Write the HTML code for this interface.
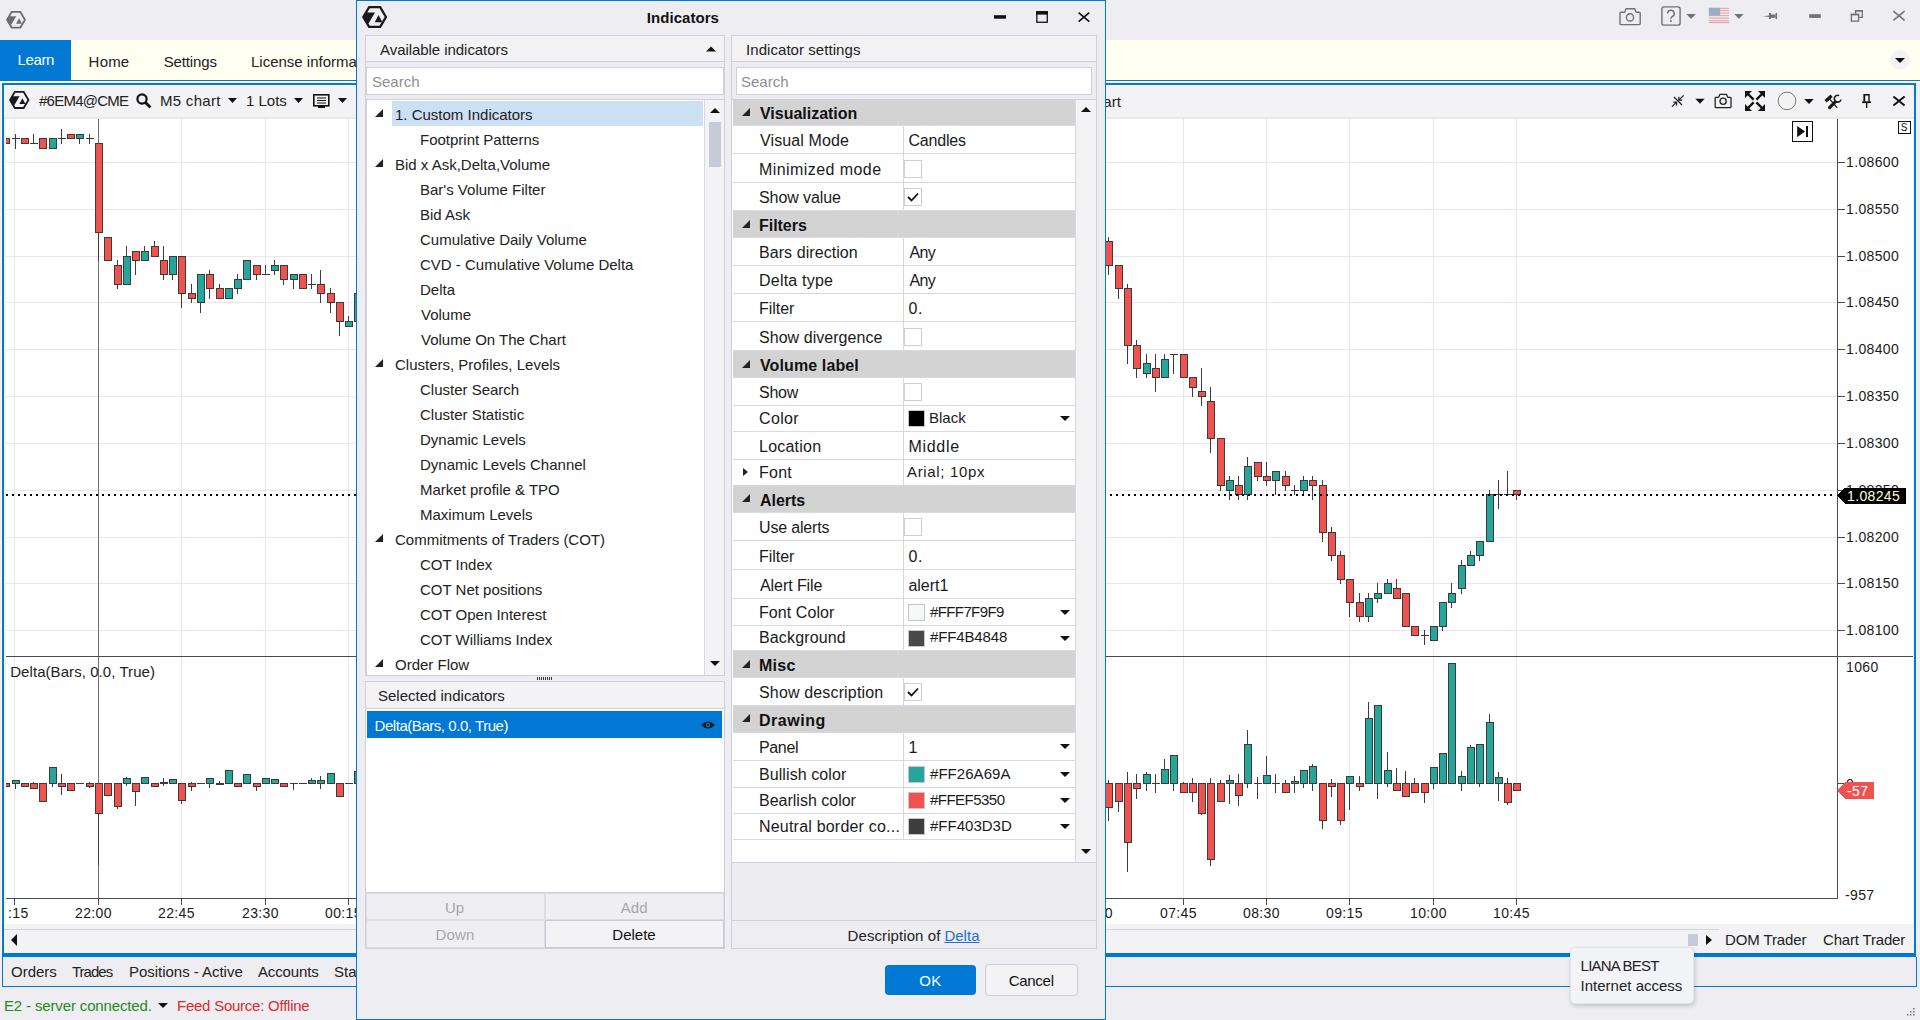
<!DOCTYPE html>
<html><head><meta charset="utf-8"><style>
*{box-sizing:border-box;}
body{margin:0;width:1920px;height:1020px;overflow:hidden;background:#EEEEF2;font-family:"Liberation Sans", sans-serif;color:#1E1E1E;position:relative;}
.a{position:absolute;}
.t{position:absolute;white-space:pre;}
svg text{font-family:"Liberation Sans", sans-serif;}
.ax{font-size:14px;fill:#1a1a1a;letter-spacing:0.35px;}
</style></head><body>

<div class="a" style="left:0;top:0;width:1920px;height:40px;background:#EEEEF2"></div>
<svg style="position:absolute;left:6px;top:11px" width="20.0" height="17.5" viewBox="0 0 100 87.3">
<path fill-rule="evenodd" d="M25.7 0 L74.3 0 L100 43.65 L74.3 87.3 L25.7 87.3 L0 43.65 Z M30.9 9 L69.1 9 L89.6 43.65 L69.1 78.3 L30.9 78.3 L10.4 43.65 Z" fill="#6C6C6F"/>
<path d="M17 25.7 L51.4 25.7 L26.5 68 L20 70 L5 43.65 Z" fill="#6C6C6F"/>
<path d="M65.6 35.9 L80 64 L50.2 64 Z" fill="#6C6C6F"/>
</svg>
<svg class="a" style="left:1600px;top:0" width="320" height="40">
<g fill="none" stroke="#707075" stroke-width="1.4" stroke-linejoin="round">
<path d="M21 12.2 h3.6 l1.4 -3.4 h8.8 l1.4 3.4 h3 a1 1 0 0 1 1 1 v10.4 a1 1 0 0 1 -1 1 h-18.2 a1 1 0 0 1 -1 -1 v-10.4 a1 1 0 0 1 1 -1z"/>
<circle cx="30" cy="17.4" r="3.6"/>
<rect x="61.9" y="6.9" width="18.2" height="18.2" rx="2.2"/>
<path d="M67.6 13.6 a3.3 3.3 0 1 1 4.6 3 c-1 0.5 -1.3 1 -1.3 2.2" stroke-width="1.5"/>
</g>
<circle cx="70.9" cy="21" r="1" fill="#707075"/>
<path d="M86.2 14 h9.7 l-4.85 4.75z" fill="#707075"/>
<rect x="108.8" y="7.8" width="20.3" height="15.2" fill="#F4EEF0"/>
<g fill="#E3A3AB"><rect x="108.8" y="7.8" width="20.3" height="1.1"/><rect x="120.2" y="10.1" width="8.9" height="1.1"/><rect x="120.2" y="12.6" width="8.9" height="1.1"/><rect x="108.8" y="15.1" width="20.3" height="1.1"/><rect x="108.8" y="17.6" width="20.3" height="1.1"/><rect x="108.8" y="20.2" width="20.3" height="1.1"/><rect x="108.8" y="22" width="20.3" height="1.1"/></g>
<rect x="108.8" y="7.8" width="11.4" height="7.8" fill="#A0AACB"/>
<path d="M134.2 14 h9.4 l-4.7 4.75z" fill="#707075"/>
<path d="M162.5 16.25 L169.5 15.6 L169.5 16.9 Z" fill="#707075"/>
<g fill="#707075"><rect x="169" y="13" width="2" height="6"/><rect x="171" y="14.5" width="4.5" height="3.3"/><rect x="175.5" y="13" width="1.6" height="6"/></g>
<rect x="209.2" y="14.2" width="11.6" height="3.7" fill="#707075"/>
<g fill="none" stroke="#707075" stroke-width="1.3"><path d="M255.6 13.7 v-3.1 h6.7 v6.7 h-3.1"/><rect x="251.4" y="14.4" width="7.2" height="6.7"/></g>
<rect x="255" y="10" width="7.9" height="1.6" fill="#707075"/><rect x="250.8" y="13.75" width="8.4" height="1.6" fill="#707075"/>
<path d="M293.3 11.2 l11.3 9.2 M304.6 11.2 l-11.3 9.2" stroke="#707075" stroke-width="1.5"/>
</svg>
<div class="a" style="left:0;top:40px;width:1920px;height:40px;background:#FFFFF2"></div>
<div class="a" style="left:0;top:80px;width:1920px;height:1px;background:#0078D4"></div>
<div class="a" style="left:0;top:81px;width:1920px;height:2px;background:#FFF9F6"></div>
<div class="a" style="left:0;top:40px;width:71px;height:41px;background:#0078D4"></div>
<div class="t" style="left:17.60px;top:52.00px;font-size:15px;line-height:15px;color:#fff;letter-spacing:-0.375px;">Learn</div>
<div class="t" style="left:88.60px;top:53.80px;font-size:15px;line-height:15px;color:#222;letter-spacing:0.200px;">Home</div>
<div class="t" style="left:163.70px;top:53.80px;font-size:15px;line-height:15px;color:#222;letter-spacing:-0.143px;">Settings</div>
<div class="t" style="left:251.00px;top:53.80px;font-size:15px;line-height:15px;color:#222;">License information</div>
<div class="a" style="left:1890px;top:50px;width:20px;height:20px;border-radius:10px;background:#F3F3F4"></div>
<svg class="a" style="left:1890px;top:50px" width="20" height="20"><path d="M5 8 h10 l-5 5z" fill="#111"/></svg>
<div class="a" style="left:1px;top:83px;width:1px;height:875px;background:#FFF9F6"></div>
<div class="a" style="left:2px;top:83px;width:1914px;height:874px;border:2px solid #0078D4;border-bottom:4px solid #0078D4;background:#F3F3F6"></div>
<div class="a" style="left:4px;top:85px;width:1910px;height:1px;background:#fff"></div>
<svg style="position:absolute;left:9px;top:91.4px" width="20.5" height="17.9" viewBox="0 0 100 87.3">
<path fill-rule="evenodd" d="M25.7 0 L74.3 0 L100 43.65 L74.3 87.3 L25.7 87.3 L0 43.65 Z M30.9 9 L69.1 9 L89.6 43.65 L69.1 78.3 L30.9 78.3 L10.4 43.65 Z" fill="#1A1A1A"/>
<path d="M17 25.7 L51.4 25.7 L26.5 68 L20 70 L5 43.65 Z" fill="#1A1A1A"/>
<path d="M65.6 35.9 L80 64 L50.2 64 Z" fill="#1A1A1A"/>
</svg>
<div class="t" style="left:39.00px;top:93.00px;font-size:15px;line-height:15px;color:#222;letter-spacing:-0.750px;">#6EM4@CME</div>
<svg class="a" style="left:130px;top:88px" width="230" height="26">
<circle cx="12" cy="11" r="4.6" fill="none" stroke="#111" stroke-width="2.2"/><path d="M15.5 14.5 l5 5" stroke="#111" stroke-width="2.8"/>
<path d="M98 10 h9 l-4.5 5z" fill="#111"/>
<path d="M164 10 h9 l-4.5 5z" fill="#111"/>
<rect x="183.8" y="6.8" width="15" height="11" fill="none" stroke="#111" stroke-width="1.6"/><path d="M187 10 h9 M187 12.5 h9 M187 15 h9" stroke="#111" stroke-width="1"/><rect x="188" y="18" width="7" height="2" fill="#111"/>
<path d="M208 10 h9 l-4.5 5z" fill="#111"/>
</svg>
<div class="t" style="left:160.00px;top:93.00px;font-size:15px;line-height:15px;color:#222;letter-spacing:0.286px;">M5 chart</div>
<div class="t" style="left:246.00px;top:93.00px;font-size:15px;line-height:15px;color:#222;">1 Lots</div>
<div class="t" style="left:1087.50px;top:94.00px;font-size:15px;line-height:15px;color:#222;">chart</div>
<svg class="a" style="left:1660px;top:86px" width="256" height="32">
<g stroke="#222" stroke-width="1.2" fill="none">
<path d="M14 11 L22 19"/><path d="M23.6 9.3 L18.8 14.1 M18.8 10.8 v3.3 h3.3"/><path d="M12 20.7 L16.6 16.1 M13.3 16.1 h3.3 v3.3"/>
</g>
<path d="M35.3 12.8 h9.4 l-4.7 5z" fill="#111"/>
<g fill="none" stroke="#222" stroke-width="1.3" stroke-linejoin="round"><path d="M56 11.3 h2.6 l1.4 -3 h6.4 l1.4 3 h2.4 a0.8 0.8 0 0 1 0.8 0.8 v8.8 a0.8 0.8 0 0 1 -0.8 0.8 h-14.2 a0.8 0.8 0 0 1 -0.8 -0.8 v-8.8 a0.8 0.8 0 0 1 0.8 -0.8z"/><circle cx="63.1" cy="15.3" r="3.1"/></g>
<g stroke="#111" stroke-width="2.4" fill="none"><path d="M87.5 7.5 L93.6 13.6 M102.5 7.5 L96.4 13.6 M87.5 22.5 L93.6 16.4 M102.5 22.5 L96.4 16.4"/></g>
<g fill="#111"><path d="M85 5 h7 l-7 7z"/><path d="M105 5 h-7 l7 7z"/><path d="M85 25 h7 l-7 -7z"/><path d="M105 25 h-7 l7 -7z"/></g>
<circle cx="127" cy="14.9" r="8.8" fill="none" stroke="#7A7A7A" stroke-width="1"/>
<path d="M144.2 13 h9.6 l-4.8 4.9z" fill="#111"/>
<g stroke="#1a1a1a" fill="none"><path d="M165.6 15.2 L171.6 9.8" stroke-width="3.2"/><path d="M169.3 12.6 L177.2 21.8" stroke-width="1.3"/><path d="M169.6 21.6 L175 16.2" stroke-width="3.2" stroke-linecap="round"/><path d="M179.2 9.6 A3.4 3.4 0 1 0 181 13.6" stroke-width="1.6"/></g>
<g fill="#111"><path d="M203.4 8 h6.3 v7.6 h-6.3z M205.2 9.4 v6.2 h3.1 v-6.2z" fill-rule="evenodd"/><rect x="202.2" y="15.3" width="8.7" height="1.8"/><rect x="206" y="17" width="1.3" height="5"/></g>
<path d="M233.4 10.4 L244.6 19.6 M244.6 10.4 L233.4 19.6" stroke="#111" stroke-width="1.9"/>
</svg>
<div class="a" style="left:4px;top:117px;width:1910px;height:2px;background:#E9E9EE"></div>
<div class="a" style="left:6px;top:119px;width:1907px;height:805px;background:#fff"></div>
<div class="a" style="left:4px;top:929px;width:1715px;height:1px;background:#D5D5DF"></div>
<svg class="a" style="left:8px;top:932px" width="12" height="16"><path d="M9 2 v12 l-6 -6z" fill="#111"/></svg>
<svg class="a" style="left:0;top:0" width="1920" height="1020" shape-rendering="crispEdges">
<defs><clipPath id="cc"><rect x="6" y="119" width="1831" height="779"/></clipPath><clipPath id="tc"><rect x="6" y="900" width="400" height="30"/></clipPath></defs>
<g clip-path="url(#cc)"><rect x="14" y="119" width="1" height="779" fill="#F1E4E9"/>
<rect x="181" y="119" width="1" height="779" fill="#F1E4E9"/>
<rect x="265" y="119" width="1" height="779" fill="#F1E4E9"/>
<rect x="348" y="119" width="1" height="779" fill="#F1E4E9"/>
<rect x="432" y="119" width="1" height="779" fill="#F1E4E9"/>
<rect x="515" y="119" width="1" height="779" fill="#F1E4E9"/>
<rect x="599" y="119" width="1" height="779" fill="#F1E4E9"/>
<rect x="682" y="119" width="1" height="779" fill="#F1E4E9"/>
<rect x="765" y="119" width="1" height="779" fill="#F1E4E9"/>
<rect x="849" y="119" width="1" height="779" fill="#F1E4E9"/>
<rect x="932" y="119" width="1" height="779" fill="#F1E4E9"/>
<rect x="1016" y="119" width="1" height="779" fill="#F1E4E9"/>
<rect x="1099" y="119" width="1" height="779" fill="#F1E4E9"/>
<rect x="1183" y="119" width="1" height="779" fill="#F1E4E9"/>
<rect x="1266" y="119" width="1" height="779" fill="#F1E4E9"/>
<rect x="1349" y="119" width="1" height="779" fill="#F1E4E9"/>
<rect x="1433" y="119" width="1" height="779" fill="#F1E4E9"/>
<rect x="1516" y="119" width="1" height="779" fill="#F1E4E9"/>
<rect x="6" y="162" width="1831" height="1" fill="#F1E4E9"/>
<rect x="6" y="209" width="1831" height="1" fill="#F1E4E9"/>
<rect x="6" y="256" width="1831" height="1" fill="#F1E4E9"/>
<rect x="6" y="302" width="1831" height="1" fill="#F1E4E9"/>
<rect x="6" y="349" width="1831" height="1" fill="#F1E4E9"/>
<rect x="6" y="396" width="1831" height="1" fill="#F1E4E9"/>
<rect x="6" y="443" width="1831" height="1" fill="#F1E4E9"/>
<rect x="6" y="490" width="1831" height="1" fill="#F1E4E9"/>
<rect x="6" y="537" width="1831" height="1" fill="#F1E4E9"/>
<rect x="6" y="583" width="1831" height="1" fill="#F1E4E9"/>
<rect x="6" y="630" width="1831" height="1" fill="#F1E4E9"/></g>
<rect x="98" y="119" width="1" height="779" fill="#707070"/>
<rect x="1837" y="119" width="1" height="780" fill="#4B4B55"/>
<rect x="6" y="656" width="1907" height="1" fill="#4B4B55"/>
<rect x="6" y="898" width="1832" height="1" fill="#4B4B55"/>
<rect x="14" y="899" width="1" height="6" fill="#4B4B55"/>
<text x="8" y="918" class="ax">:15</text>
<rect x="98" y="899" width="1" height="6" fill="#4B4B55"/>
<text x="75" y="918" class="ax">22:00</text>
<rect x="181" y="899" width="1" height="6" fill="#4B4B55"/>
<text x="158" y="918" class="ax">22:45</text>
<rect x="265" y="899" width="1" height="6" fill="#4B4B55"/>
<text x="242" y="918" class="ax">23:30</text>
<rect x="348" y="899" width="1" height="6" fill="#4B4B55"/>
<text x="325" y="918" class="ax">00:15</text>
<rect x="1099" y="899" width="1" height="6" fill="#4B4B55"/>
<text x="1076" y="918" class="ax">07:00</text>
<rect x="1183" y="899" width="1" height="6" fill="#4B4B55"/>
<text x="1160" y="918" class="ax">07:45</text>
<rect x="1266" y="899" width="1" height="6" fill="#4B4B55"/>
<text x="1243" y="918" class="ax">08:30</text>
<rect x="1349" y="899" width="1" height="6" fill="#4B4B55"/>
<text x="1326" y="918" class="ax">09:15</text>
<rect x="1433" y="899" width="1" height="6" fill="#4B4B55"/>
<text x="1410" y="918" class="ax">10:00</text>
<rect x="1516" y="899" width="1" height="6" fill="#4B4B55"/>
<text x="1493" y="918" class="ax">10:45</text>
<rect x="1838" y="162" width="7" height="1" fill="#4B4B55"/>
<text x="1846" y="167" class="ax">1.08600</text>
<rect x="1838" y="209" width="7" height="1" fill="#4B4B55"/>
<text x="1846" y="214" class="ax">1.08550</text>
<rect x="1838" y="256" width="7" height="1" fill="#4B4B55"/>
<text x="1846" y="261" class="ax">1.08500</text>
<rect x="1838" y="302" width="7" height="1" fill="#4B4B55"/>
<text x="1846" y="307" class="ax">1.08450</text>
<rect x="1838" y="349" width="7" height="1" fill="#4B4B55"/>
<text x="1846" y="354" class="ax">1.08400</text>
<rect x="1838" y="396" width="7" height="1" fill="#4B4B55"/>
<text x="1846" y="401" class="ax">1.08350</text>
<rect x="1838" y="443" width="7" height="1" fill="#4B4B55"/>
<text x="1846" y="448" class="ax">1.08300</text>
<rect x="1838" y="490" width="7" height="1" fill="#4B4B55"/>
<text x="1846" y="495" class="ax">1.08250</text>
<rect x="1838" y="537" width="7" height="1" fill="#4B4B55"/>
<text x="1846" y="542" class="ax">1.08200</text>
<rect x="1838" y="583" width="7" height="1" fill="#4B4B55"/>
<text x="1846" y="588" class="ax">1.08150</text>
<rect x="1838" y="630" width="7" height="1" fill="#4B4B55"/>
<text x="1846" y="635" class="ax">1.08100</text>
<g clip-path="url(#cc)"><rect x="2.5" y="138.5" width="7" height="5" fill="#EF5350" stroke="#3D3A3A" stroke-width="1"/>
<rect x="15" y="134" width="1" height="4" fill="#3D3A3A"/>
<rect x="15" y="139" width="1" height="10" fill="#3D3A3A"/>
<rect x="12" y="138" width="8" height="1" fill="#3D3A3A"/>
<rect x="21.5" y="138.5" width="7" height="5" fill="#EF5350" stroke="#3D3A3A" stroke-width="1"/>
<rect x="33" y="134" width="1" height="9" fill="#3D3A3A"/>
<rect x="30" y="143" width="8" height="1" fill="#3D3A3A"/>
<rect x="39.5" y="138.5" width="7" height="10" fill="#EF5350" stroke="#3D3A3A" stroke-width="1"/>
<rect x="49.5" y="138.5" width="7" height="10" fill="#26A69A" stroke="#3D3A3A" stroke-width="1"/>
<rect x="61" y="129" width="1" height="9" fill="#3D3A3A"/>
<rect x="61" y="139" width="1" height="5" fill="#3D3A3A"/>
<rect x="58" y="138" width="8" height="1" fill="#3D3A3A"/>
<rect x="67.5" y="134.5" width="7" height="4" fill="#EF5350" stroke="#3D3A3A" stroke-width="1"/>
<rect x="79" y="139" width="1" height="5" fill="#3D3A3A"/>
<rect x="76.5" y="134.5" width="7" height="4" fill="#26A69A" stroke="#3D3A3A" stroke-width="1"/>
<rect x="89" y="134" width="1" height="4" fill="#3D3A3A"/>
<rect x="89" y="139" width="1" height="5" fill="#3D3A3A"/>
<rect x="86" y="138" width="8" height="1" fill="#3D3A3A"/>
<rect x="98" y="233" width="1" height="28" fill="#3D3A3A"/>
<rect x="95.5" y="143.5" width="7" height="89" fill="#EF5350" stroke="#3D3A3A" stroke-width="1"/>
<rect x="104.5" y="237.5" width="7" height="23" fill="#EF5350" stroke="#3D3A3A" stroke-width="1"/>
<rect x="117" y="260" width="1" height="5" fill="#3D3A3A"/>
<rect x="117" y="285" width="1" height="4" fill="#3D3A3A"/>
<rect x="114.5" y="265.5" width="7" height="19" fill="#EF5350" stroke="#3D3A3A" stroke-width="1"/>
<rect x="126" y="246" width="1" height="10" fill="#3D3A3A"/>
<rect x="123.5" y="256.5" width="7" height="28" fill="#26A69A" stroke="#3D3A3A" stroke-width="1"/>
<rect x="135" y="261" width="1" height="14" fill="#3D3A3A"/>
<rect x="132.5" y="251.5" width="7" height="9" fill="#EF5350" stroke="#3D3A3A" stroke-width="1"/>
<rect x="144" y="246" width="1" height="5" fill="#3D3A3A"/>
<rect x="141.5" y="251.5" width="7" height="9" fill="#26A69A" stroke="#3D3A3A" stroke-width="1"/>
<rect x="154" y="241" width="1" height="5" fill="#3D3A3A"/>
<rect x="151.5" y="246.5" width="7" height="10" fill="#EF5350" stroke="#3D3A3A" stroke-width="1"/>
<rect x="163" y="246" width="1" height="14" fill="#3D3A3A"/>
<rect x="163" y="275" width="1" height="5" fill="#3D3A3A"/>
<rect x="160.5" y="260.5" width="7" height="14" fill="#EF5350" stroke="#3D3A3A" stroke-width="1"/>
<rect x="172" y="275" width="1" height="5" fill="#3D3A3A"/>
<rect x="169.5" y="256.5" width="7" height="18" fill="#26A69A" stroke="#3D3A3A" stroke-width="1"/>
<rect x="181" y="294" width="1" height="14" fill="#3D3A3A"/>
<rect x="178.5" y="256.5" width="7" height="37" fill="#EF5350" stroke="#3D3A3A" stroke-width="1"/>
<rect x="191" y="284" width="1" height="9" fill="#3D3A3A"/>
<rect x="191" y="299" width="1" height="4" fill="#3D3A3A"/>
<rect x="188.5" y="293.5" width="7" height="5" fill="#EF5350" stroke="#3D3A3A" stroke-width="1"/>
<rect x="200" y="303" width="1" height="10" fill="#3D3A3A"/>
<rect x="197.5" y="274.5" width="7" height="28" fill="#26A69A" stroke="#3D3A3A" stroke-width="1"/>
<rect x="209" y="270" width="1" height="4" fill="#3D3A3A"/>
<rect x="209" y="289" width="1" height="10" fill="#3D3A3A"/>
<rect x="206.5" y="274.5" width="7" height="14" fill="#EF5350" stroke="#3D3A3A" stroke-width="1"/>
<rect x="219" y="284" width="1" height="4" fill="#3D3A3A"/>
<rect x="216.5" y="288.5" width="7" height="10" fill="#EF5350" stroke="#3D3A3A" stroke-width="1"/>
<rect x="225.5" y="288.5" width="7" height="10" fill="#26A69A" stroke="#3D3A3A" stroke-width="1"/>
<rect x="237" y="274" width="1" height="5" fill="#3D3A3A"/>
<rect x="237" y="289" width="1" height="5" fill="#3D3A3A"/>
<rect x="234.5" y="279.5" width="7" height="9" fill="#26A69A" stroke="#3D3A3A" stroke-width="1"/>
<rect x="243.5" y="260.5" width="7" height="19" fill="#26A69A" stroke="#3D3A3A" stroke-width="1"/>
<rect x="256" y="275" width="1" height="5" fill="#3D3A3A"/>
<rect x="253.5" y="265.5" width="7" height="9" fill="#EF5350" stroke="#3D3A3A" stroke-width="1"/>
<rect x="265" y="265" width="1" height="9" fill="#3D3A3A"/>
<rect x="262" y="274" width="8" height="1" fill="#3D3A3A"/>
<rect x="274" y="260" width="1" height="5" fill="#3D3A3A"/>
<rect x="274" y="271" width="1" height="4" fill="#3D3A3A"/>
<rect x="271.5" y="265.5" width="7" height="5" fill="#26A69A" stroke="#3D3A3A" stroke-width="1"/>
<rect x="283" y="280" width="1" height="5" fill="#3D3A3A"/>
<rect x="280.5" y="265.5" width="7" height="14" fill="#EF5350" stroke="#3D3A3A" stroke-width="1"/>
<rect x="293" y="280" width="1" height="9" fill="#3D3A3A"/>
<rect x="290.5" y="274.5" width="7" height="5" fill="#26A69A" stroke="#3D3A3A" stroke-width="1"/>
<rect x="299.5" y="274.5" width="7" height="14" fill="#EF5350" stroke="#3D3A3A" stroke-width="1"/>
<rect x="311" y="274" width="1" height="10" fill="#3D3A3A"/>
<rect x="311" y="285" width="1" height="4" fill="#3D3A3A"/>
<rect x="308" y="284" width="8" height="1" fill="#3D3A3A"/>
<rect x="320" y="270" width="1" height="14" fill="#3D3A3A"/>
<rect x="320" y="294" width="1" height="9" fill="#3D3A3A"/>
<rect x="317.5" y="284.5" width="7" height="9" fill="#EF5350" stroke="#3D3A3A" stroke-width="1"/>
<rect x="330" y="288" width="1" height="5" fill="#3D3A3A"/>
<rect x="330" y="303" width="1" height="10" fill="#3D3A3A"/>
<rect x="327.5" y="293.5" width="7" height="9" fill="#EF5350" stroke="#3D3A3A" stroke-width="1"/>
<rect x="339" y="322" width="1" height="14" fill="#3D3A3A"/>
<rect x="336.5" y="302.5" width="7" height="19" fill="#EF5350" stroke="#3D3A3A" stroke-width="1"/>
<rect x="348" y="316" width="1" height="5" fill="#3D3A3A"/>
<rect x="345.5" y="321.5" width="7" height="5" fill="#26A69A" stroke="#3D3A3A" stroke-width="1"/>
<rect x="354.5" y="293.5" width="7" height="28" fill="#26A69A" stroke="#3D3A3A" stroke-width="1"/>
<rect x="1108" y="237" width="1" height="4" fill="#3D3A3A"/>
<rect x="1108" y="266" width="1" height="9" fill="#3D3A3A"/>
<rect x="1105.5" y="241.5" width="7" height="24" fill="#EF5350" stroke="#3D3A3A" stroke-width="1"/>
<rect x="1118" y="289" width="1" height="10" fill="#3D3A3A"/>
<rect x="1115.5" y="265.5" width="7" height="23" fill="#EF5350" stroke="#3D3A3A" stroke-width="1"/>
<rect x="1127" y="284" width="1" height="4" fill="#3D3A3A"/>
<rect x="1127" y="346" width="1" height="18" fill="#3D3A3A"/>
<rect x="1124.5" y="288.5" width="7" height="57" fill="#EF5350" stroke="#3D3A3A" stroke-width="1"/>
<rect x="1136" y="340" width="1" height="5" fill="#3D3A3A"/>
<rect x="1136" y="369" width="1" height="9" fill="#3D3A3A"/>
<rect x="1133.5" y="345.5" width="7" height="23" fill="#EF5350" stroke="#3D3A3A" stroke-width="1"/>
<rect x="1146" y="354" width="1" height="9" fill="#3D3A3A"/>
<rect x="1146" y="374" width="1" height="4" fill="#3D3A3A"/>
<rect x="1143.5" y="363.5" width="7" height="10" fill="#26A69A" stroke="#3D3A3A" stroke-width="1"/>
<rect x="1155" y="354" width="1" height="14" fill="#3D3A3A"/>
<rect x="1155" y="378" width="1" height="14" fill="#3D3A3A"/>
<rect x="1152.5" y="368.5" width="7" height="9" fill="#EF5350" stroke="#3D3A3A" stroke-width="1"/>
<rect x="1164" y="354" width="1" height="5" fill="#3D3A3A"/>
<rect x="1161.5" y="359.5" width="7" height="18" fill="#26A69A" stroke="#3D3A3A" stroke-width="1"/>
<rect x="1173" y="355" width="1" height="19" fill="#3D3A3A"/>
<rect x="1170" y="354" width="8" height="1" fill="#3D3A3A"/>
<rect x="1180.5" y="354.5" width="7" height="23" fill="#EF5350" stroke="#3D3A3A" stroke-width="1"/>
<rect x="1192" y="388" width="1" height="9" fill="#3D3A3A"/>
<rect x="1189.5" y="377.5" width="7" height="10" fill="#EF5350" stroke="#3D3A3A" stroke-width="1"/>
<rect x="1201" y="368" width="1" height="23" fill="#3D3A3A"/>
<rect x="1201" y="397" width="1" height="9" fill="#3D3A3A"/>
<rect x="1198.5" y="391.5" width="7" height="5" fill="#EF5350" stroke="#3D3A3A" stroke-width="1"/>
<rect x="1210" y="387" width="1" height="14" fill="#3D3A3A"/>
<rect x="1210" y="439" width="1" height="14" fill="#3D3A3A"/>
<rect x="1207.5" y="401.5" width="7" height="37" fill="#EF5350" stroke="#3D3A3A" stroke-width="1"/>
<rect x="1220" y="486" width="1" height="5" fill="#3D3A3A"/>
<rect x="1217.5" y="438.5" width="7" height="47" fill="#EF5350" stroke="#3D3A3A" stroke-width="1"/>
<rect x="1229" y="476" width="1" height="4" fill="#3D3A3A"/>
<rect x="1229" y="491" width="1" height="9" fill="#3D3A3A"/>
<rect x="1226.5" y="480.5" width="7" height="10" fill="#26A69A" stroke="#3D3A3A" stroke-width="1"/>
<rect x="1238" y="476" width="1" height="9" fill="#3D3A3A"/>
<rect x="1238" y="495" width="1" height="5" fill="#3D3A3A"/>
<rect x="1235.5" y="485.5" width="7" height="9" fill="#EF5350" stroke="#3D3A3A" stroke-width="1"/>
<rect x="1247" y="457" width="1" height="9" fill="#3D3A3A"/>
<rect x="1247" y="495" width="1" height="5" fill="#3D3A3A"/>
<rect x="1244.5" y="466.5" width="7" height="28" fill="#26A69A" stroke="#3D3A3A" stroke-width="1"/>
<rect x="1257" y="477" width="1" height="4" fill="#3D3A3A"/>
<rect x="1254.5" y="462.5" width="7" height="14" fill="#EF5350" stroke="#3D3A3A" stroke-width="1"/>
<rect x="1266" y="462" width="1" height="14" fill="#3D3A3A"/>
<rect x="1266" y="481" width="1" height="5" fill="#3D3A3A"/>
<rect x="1263.5" y="476.5" width="7" height="4" fill="#EF5350" stroke="#3D3A3A" stroke-width="1"/>
<rect x="1275" y="481" width="1" height="14" fill="#3D3A3A"/>
<rect x="1272.5" y="471.5" width="7" height="9" fill="#26A69A" stroke="#3D3A3A" stroke-width="1"/>
<rect x="1285" y="471" width="1" height="5" fill="#3D3A3A"/>
<rect x="1285" y="486" width="1" height="5" fill="#3D3A3A"/>
<rect x="1282.5" y="476.5" width="7" height="9" fill="#EF5350" stroke="#3D3A3A" stroke-width="1"/>
<rect x="1294" y="485" width="1" height="5" fill="#3D3A3A"/>
<rect x="1294" y="491" width="1" height="4" fill="#3D3A3A"/>
<rect x="1291" y="490" width="8" height="1" fill="#3D3A3A"/>
<rect x="1303" y="476" width="1" height="4" fill="#3D3A3A"/>
<rect x="1303" y="491" width="1" height="4" fill="#3D3A3A"/>
<rect x="1300.5" y="480.5" width="7" height="10" fill="#26A69A" stroke="#3D3A3A" stroke-width="1"/>
<rect x="1312" y="476" width="1" height="4" fill="#3D3A3A"/>
<rect x="1312" y="486" width="1" height="14" fill="#3D3A3A"/>
<rect x="1309.5" y="480.5" width="7" height="5" fill="#EF5350" stroke="#3D3A3A" stroke-width="1"/>
<rect x="1322" y="480" width="1" height="5" fill="#3D3A3A"/>
<rect x="1322" y="533" width="1" height="9" fill="#3D3A3A"/>
<rect x="1319.5" y="485.5" width="7" height="47" fill="#EF5350" stroke="#3D3A3A" stroke-width="1"/>
<rect x="1331" y="527" width="1" height="5" fill="#3D3A3A"/>
<rect x="1331" y="556" width="1" height="5" fill="#3D3A3A"/>
<rect x="1328.5" y="532.5" width="7" height="23" fill="#EF5350" stroke="#3D3A3A" stroke-width="1"/>
<rect x="1340" y="551" width="1" height="4" fill="#3D3A3A"/>
<rect x="1340" y="580" width="1" height="4" fill="#3D3A3A"/>
<rect x="1337.5" y="555.5" width="7" height="24" fill="#EF5350" stroke="#3D3A3A" stroke-width="1"/>
<rect x="1349" y="603" width="1" height="14" fill="#3D3A3A"/>
<rect x="1346.5" y="579.5" width="7" height="23" fill="#EF5350" stroke="#3D3A3A" stroke-width="1"/>
<rect x="1359" y="593" width="1" height="9" fill="#3D3A3A"/>
<rect x="1359" y="617" width="1" height="5" fill="#3D3A3A"/>
<rect x="1356.5" y="602.5" width="7" height="14" fill="#EF5350" stroke="#3D3A3A" stroke-width="1"/>
<rect x="1368" y="593" width="1" height="5" fill="#3D3A3A"/>
<rect x="1368" y="617" width="1" height="5" fill="#3D3A3A"/>
<rect x="1365.5" y="598.5" width="7" height="18" fill="#26A69A" stroke="#3D3A3A" stroke-width="1"/>
<rect x="1377" y="583" width="1" height="10" fill="#3D3A3A"/>
<rect x="1377" y="599" width="1" height="4" fill="#3D3A3A"/>
<rect x="1374.5" y="593.5" width="7" height="5" fill="#26A69A" stroke="#3D3A3A" stroke-width="1"/>
<rect x="1387" y="579" width="1" height="4" fill="#3D3A3A"/>
<rect x="1384.5" y="583.5" width="7" height="10" fill="#26A69A" stroke="#3D3A3A" stroke-width="1"/>
<rect x="1396" y="579" width="1" height="9" fill="#3D3A3A"/>
<rect x="1393.5" y="588.5" width="7" height="10" fill="#EF5350" stroke="#3D3A3A" stroke-width="1"/>
<rect x="1402.5" y="593.5" width="7" height="33" fill="#EF5350" stroke="#3D3A3A" stroke-width="1"/>
<rect x="1411.5" y="626.5" width="7" height="9" fill="#EF5350" stroke="#3D3A3A" stroke-width="1"/>
<rect x="1424" y="630" width="1" height="5" fill="#3D3A3A"/>
<rect x="1424" y="636" width="1" height="9" fill="#3D3A3A"/>
<rect x="1421" y="635" width="8" height="1" fill="#3D3A3A"/>
<rect x="1430.5" y="626.5" width="7" height="14" fill="#26A69A" stroke="#3D3A3A" stroke-width="1"/>
<rect x="1442" y="627" width="1" height="4" fill="#3D3A3A"/>
<rect x="1439.5" y="602.5" width="7" height="24" fill="#26A69A" stroke="#3D3A3A" stroke-width="1"/>
<rect x="1451" y="583" width="1" height="10" fill="#3D3A3A"/>
<rect x="1451" y="603" width="1" height="5" fill="#3D3A3A"/>
<rect x="1448.5" y="593.5" width="7" height="9" fill="#26A69A" stroke="#3D3A3A" stroke-width="1"/>
<rect x="1461" y="560" width="1" height="5" fill="#3D3A3A"/>
<rect x="1461" y="589" width="1" height="5" fill="#3D3A3A"/>
<rect x="1458.5" y="565.5" width="7" height="23" fill="#26A69A" stroke="#3D3A3A" stroke-width="1"/>
<rect x="1470" y="551" width="1" height="4" fill="#3D3A3A"/>
<rect x="1467.5" y="555.5" width="7" height="10" fill="#26A69A" stroke="#3D3A3A" stroke-width="1"/>
<rect x="1479" y="556" width="1" height="5" fill="#3D3A3A"/>
<rect x="1476.5" y="541.5" width="7" height="14" fill="#26A69A" stroke="#3D3A3A" stroke-width="1"/>
<rect x="1489" y="490" width="1" height="4" fill="#3D3A3A"/>
<rect x="1486.5" y="494.5" width="7" height="47" fill="#26A69A" stroke="#3D3A3A" stroke-width="1"/>
<rect x="1498" y="480" width="1" height="14" fill="#3D3A3A"/>
<rect x="1498" y="495" width="1" height="14" fill="#3D3A3A"/>
<rect x="1495" y="494" width="8" height="1" fill="#3D3A3A"/>
<rect x="1507" y="471" width="1" height="23" fill="#3D3A3A"/>
<rect x="1504" y="494" width="8" height="1" fill="#3D3A3A"/>
<rect x="1516" y="495" width="1" height="5" fill="#3D3A3A"/>
<rect x="1513.5" y="490.5" width="7" height="4" fill="#EF5350" stroke="#3D3A3A" stroke-width="1"/><rect x="2.5" y="783.5" width="7" height="3" fill="#EF5350" stroke="#3D3A3A" stroke-width="1"/>
<rect x="15" y="784" width="1" height="5" fill="#3D3A3A"/>
<rect x="12.5" y="780.5" width="7" height="3" fill="#26A69A" stroke="#3D3A3A" stroke-width="1"/>
<rect x="21.5" y="783.5" width="7" height="3" fill="#EF5350" stroke="#3D3A3A" stroke-width="1"/>
<rect x="33" y="782" width="1" height="1" fill="#3D3A3A"/>
<rect x="30.5" y="783.5" width="7" height="5" fill="#EF5350" stroke="#3D3A3A" stroke-width="1"/>
<rect x="39.5" y="783.5" width="7" height="18" fill="#EF5350" stroke="#3D3A3A" stroke-width="1"/>
<rect x="52" y="784" width="1" height="3" fill="#3D3A3A"/>
<rect x="49.5" y="767.5" width="7" height="16" fill="#26A69A" stroke="#3D3A3A" stroke-width="1"/>
<rect x="61" y="774" width="1" height="9" fill="#3D3A3A"/>
<rect x="61" y="787" width="1" height="8" fill="#3D3A3A"/>
<rect x="58.5" y="783.5" width="7" height="3" fill="#EF5350" stroke="#3D3A3A" stroke-width="1"/>
<rect x="67.5" y="783.5" width="7" height="7" fill="#EF5350" stroke="#3D3A3A" stroke-width="1"/>
<rect x="76" y="783" width="8" height="1" fill="#3D3A3A"/>
<rect x="89" y="782" width="1" height="1" fill="#3D3A3A"/>
<rect x="89" y="787" width="1" height="1" fill="#3D3A3A"/>
<rect x="86.5" y="783.5" width="7" height="3" fill="#EF5350" stroke="#3D3A3A" stroke-width="1"/>
<rect x="98" y="814" width="1" height="51" fill="#3D3A3A"/>
<rect x="95.5" y="783.5" width="7" height="30" fill="#EF5350" stroke="#3D3A3A" stroke-width="1"/>
<rect x="104.5" y="783.5" width="7" height="12" fill="#EF5350" stroke="#3D3A3A" stroke-width="1"/>
<rect x="117" y="807" width="1" height="2" fill="#3D3A3A"/>
<rect x="114.5" y="783.5" width="7" height="23" fill="#EF5350" stroke="#3D3A3A" stroke-width="1"/>
<rect x="126" y="777" width="1" height="1" fill="#3D3A3A"/>
<rect x="126" y="784" width="1" height="2" fill="#3D3A3A"/>
<rect x="123.5" y="778.5" width="7" height="5" fill="#26A69A" stroke="#3D3A3A" stroke-width="1"/>
<rect x="135" y="792" width="1" height="14" fill="#3D3A3A"/>
<rect x="132.5" y="783.5" width="7" height="8" fill="#EF5350" stroke="#3D3A3A" stroke-width="1"/>
<rect x="141.5" y="777.5" width="7" height="6" fill="#26A69A" stroke="#3D3A3A" stroke-width="1"/>
<rect x="151.5" y="783.5" width="7" height="3" fill="#EF5350" stroke="#3D3A3A" stroke-width="1"/>
<rect x="163" y="778" width="1" height="4" fill="#3D3A3A"/>
<rect x="163" y="784" width="1" height="2" fill="#3D3A3A"/>
<rect x="160.5" y="782.5" width="7" height="1" fill="#26A69A" stroke="#3D3A3A" stroke-width="1"/>
<rect x="169.5" y="779.5" width="7" height="4" fill="#26A69A" stroke="#3D3A3A" stroke-width="1"/>
<rect x="181" y="801" width="1" height="3" fill="#3D3A3A"/>
<rect x="178.5" y="783.5" width="7" height="17" fill="#EF5350" stroke="#3D3A3A" stroke-width="1"/>
<rect x="191" y="782" width="1" height="1" fill="#3D3A3A"/>
<rect x="191" y="787" width="1" height="4" fill="#3D3A3A"/>
<rect x="188.5" y="783.5" width="7" height="3" fill="#EF5350" stroke="#3D3A3A" stroke-width="1"/>
<rect x="197" y="783" width="8" height="1" fill="#3D3A3A"/>
<rect x="209" y="784" width="1" height="4" fill="#3D3A3A"/>
<rect x="206.5" y="778.5" width="7" height="5" fill="#26A69A" stroke="#3D3A3A" stroke-width="1"/>
<rect x="219" y="781" width="1" height="2" fill="#3D3A3A"/>
<rect x="216.5" y="783.5" width="7" height="1" fill="#EF5350" stroke="#3D3A3A" stroke-width="1"/>
<rect x="225.5" y="770.5" width="7" height="13" fill="#26A69A" stroke="#3D3A3A" stroke-width="1"/>
<rect x="234.5" y="783.5" width="7" height="3" fill="#EF5350" stroke="#3D3A3A" stroke-width="1"/>
<rect x="243.5" y="774.5" width="7" height="9" fill="#26A69A" stroke="#3D3A3A" stroke-width="1"/>
<rect x="256" y="787" width="1" height="4" fill="#3D3A3A"/>
<rect x="253.5" y="783.5" width="7" height="3" fill="#EF5350" stroke="#3D3A3A" stroke-width="1"/>
<rect x="262.5" y="778.5" width="7" height="5" fill="#26A69A" stroke="#3D3A3A" stroke-width="1"/>
<rect x="271.5" y="779.5" width="7" height="4" fill="#26A69A" stroke="#3D3A3A" stroke-width="1"/>
<rect x="280.5" y="783.5" width="7" height="3" fill="#EF5350" stroke="#3D3A3A" stroke-width="1"/>
<rect x="293" y="784" width="1" height="6" fill="#3D3A3A"/>
<rect x="290" y="783" width="8" height="1" fill="#3D3A3A"/>
<rect x="299" y="783" width="8" height="1" fill="#3D3A3A"/>
<rect x="311" y="778" width="1" height="2" fill="#3D3A3A"/>
<rect x="308.5" y="780.5" width="7" height="3" fill="#26A69A" stroke="#3D3A3A" stroke-width="1"/>
<rect x="320" y="776" width="1" height="4" fill="#3D3A3A"/>
<rect x="320" y="784" width="1" height="5" fill="#3D3A3A"/>
<rect x="317.5" y="780.5" width="7" height="3" fill="#26A69A" stroke="#3D3A3A" stroke-width="1"/>
<rect x="327.5" y="773.5" width="7" height="10" fill="#26A69A" stroke="#3D3A3A" stroke-width="1"/>
<rect x="336.5" y="783.5" width="7" height="13" fill="#EF5350" stroke="#3D3A3A" stroke-width="1"/>
<rect x="345" y="783" width="8" height="1" fill="#3D3A3A"/>
<rect x="354.5" y="771.5" width="7" height="12" fill="#26A69A" stroke="#3D3A3A" stroke-width="1"/>
<rect x="1108" y="780" width="1" height="3" fill="#3D3A3A"/>
<rect x="1108" y="808" width="1" height="13" fill="#3D3A3A"/>
<rect x="1105.5" y="783.5" width="7" height="24" fill="#EF5350" stroke="#3D3A3A" stroke-width="1"/>
<rect x="1118" y="802" width="1" height="10" fill="#3D3A3A"/>
<rect x="1115.5" y="783.5" width="7" height="18" fill="#EF5350" stroke="#3D3A3A" stroke-width="1"/>
<rect x="1127" y="772" width="1" height="11" fill="#3D3A3A"/>
<rect x="1127" y="843" width="1" height="29" fill="#3D3A3A"/>
<rect x="1124.5" y="783.5" width="7" height="59" fill="#EF5350" stroke="#3D3A3A" stroke-width="1"/>
<rect x="1136" y="774" width="1" height="9" fill="#3D3A3A"/>
<rect x="1136" y="789" width="1" height="10" fill="#3D3A3A"/>
<rect x="1133.5" y="783.5" width="7" height="5" fill="#EF5350" stroke="#3D3A3A" stroke-width="1"/>
<rect x="1146" y="772" width="1" height="2" fill="#3D3A3A"/>
<rect x="1146" y="784" width="1" height="7" fill="#3D3A3A"/>
<rect x="1143.5" y="774.5" width="7" height="9" fill="#26A69A" stroke="#3D3A3A" stroke-width="1"/>
<rect x="1155" y="774" width="1" height="9" fill="#3D3A3A"/>
<rect x="1155" y="784" width="1" height="9" fill="#3D3A3A"/>
<rect x="1152" y="783" width="8" height="1" fill="#3D3A3A"/>
<rect x="1164" y="759" width="1" height="10" fill="#3D3A3A"/>
<rect x="1161.5" y="769.5" width="7" height="14" fill="#26A69A" stroke="#3D3A3A" stroke-width="1"/>
<rect x="1173" y="784" width="1" height="7" fill="#3D3A3A"/>
<rect x="1170.5" y="755.5" width="7" height="28" fill="#26A69A" stroke="#3D3A3A" stroke-width="1"/>
<rect x="1183" y="782" width="1" height="1" fill="#3D3A3A"/>
<rect x="1180.5" y="783.5" width="7" height="9" fill="#EF5350" stroke="#3D3A3A" stroke-width="1"/>
<rect x="1192" y="778" width="1" height="5" fill="#3D3A3A"/>
<rect x="1192" y="793" width="1" height="9" fill="#3D3A3A"/>
<rect x="1189.5" y="783.5" width="7" height="9" fill="#EF5350" stroke="#3D3A3A" stroke-width="1"/>
<rect x="1201" y="814" width="1" height="1" fill="#3D3A3A"/>
<rect x="1198.5" y="783.5" width="7" height="30" fill="#EF5350" stroke="#3D3A3A" stroke-width="1"/>
<rect x="1210" y="778" width="1" height="5" fill="#3D3A3A"/>
<rect x="1210" y="860" width="1" height="6" fill="#3D3A3A"/>
<rect x="1207.5" y="783.5" width="7" height="76" fill="#EF5350" stroke="#3D3A3A" stroke-width="1"/>
<rect x="1220" y="780" width="1" height="3" fill="#3D3A3A"/>
<rect x="1217.5" y="783.5" width="7" height="18" fill="#EF5350" stroke="#3D3A3A" stroke-width="1"/>
<rect x="1229" y="775" width="1" height="5" fill="#3D3A3A"/>
<rect x="1229" y="784" width="1" height="20" fill="#3D3A3A"/>
<rect x="1226.5" y="780.5" width="7" height="3" fill="#26A69A" stroke="#3D3A3A" stroke-width="1"/>
<rect x="1238" y="774" width="1" height="9" fill="#3D3A3A"/>
<rect x="1238" y="796" width="1" height="10" fill="#3D3A3A"/>
<rect x="1235.5" y="783.5" width="7" height="12" fill="#EF5350" stroke="#3D3A3A" stroke-width="1"/>
<rect x="1247" y="730" width="1" height="14" fill="#3D3A3A"/>
<rect x="1247" y="784" width="1" height="4" fill="#3D3A3A"/>
<rect x="1244.5" y="744.5" width="7" height="39" fill="#26A69A" stroke="#3D3A3A" stroke-width="1"/>
<rect x="1257" y="777" width="1" height="6" fill="#3D3A3A"/>
<rect x="1257" y="784" width="1" height="15" fill="#3D3A3A"/>
<rect x="1254" y="783" width="8" height="1" fill="#3D3A3A"/>
<rect x="1266" y="756" width="1" height="19" fill="#3D3A3A"/>
<rect x="1263.5" y="775.5" width="7" height="8" fill="#26A69A" stroke="#3D3A3A" stroke-width="1"/>
<rect x="1275" y="774" width="1" height="9" fill="#3D3A3A"/>
<rect x="1275" y="784" width="1" height="9" fill="#3D3A3A"/>
<rect x="1272" y="783" width="8" height="1" fill="#3D3A3A"/>
<rect x="1285" y="780" width="1" height="3" fill="#3D3A3A"/>
<rect x="1282.5" y="783.5" width="7" height="9" fill="#EF5350" stroke="#3D3A3A" stroke-width="1"/>
<rect x="1294" y="776" width="1" height="5" fill="#3D3A3A"/>
<rect x="1294" y="784" width="1" height="9" fill="#3D3A3A"/>
<rect x="1291.5" y="781.5" width="7" height="2" fill="#26A69A" stroke="#3D3A3A" stroke-width="1"/>
<rect x="1303" y="784" width="1" height="4" fill="#3D3A3A"/>
<rect x="1300.5" y="770.5" width="7" height="13" fill="#26A69A" stroke="#3D3A3A" stroke-width="1"/>
<rect x="1312" y="764" width="1" height="2" fill="#3D3A3A"/>
<rect x="1312" y="784" width="1" height="7" fill="#3D3A3A"/>
<rect x="1309.5" y="766.5" width="7" height="17" fill="#26A69A" stroke="#3D3A3A" stroke-width="1"/>
<rect x="1322" y="821" width="1" height="8" fill="#3D3A3A"/>
<rect x="1319.5" y="783.5" width="7" height="37" fill="#EF5350" stroke="#3D3A3A" stroke-width="1"/>
<rect x="1331" y="779" width="1" height="4" fill="#3D3A3A"/>
<rect x="1331" y="787" width="1" height="10" fill="#3D3A3A"/>
<rect x="1328.5" y="783.5" width="7" height="3" fill="#EF5350" stroke="#3D3A3A" stroke-width="1"/>
<rect x="1340" y="821" width="1" height="4" fill="#3D3A3A"/>
<rect x="1337.5" y="783.5" width="7" height="37" fill="#EF5350" stroke="#3D3A3A" stroke-width="1"/>
<rect x="1349" y="784" width="1" height="26" fill="#3D3A3A"/>
<rect x="1346.5" y="776.5" width="7" height="7" fill="#26A69A" stroke="#3D3A3A" stroke-width="1"/>
<rect x="1359" y="776" width="1" height="7" fill="#3D3A3A"/>
<rect x="1359" y="787" width="1" height="4" fill="#3D3A3A"/>
<rect x="1356.5" y="783.5" width="7" height="3" fill="#EF5350" stroke="#3D3A3A" stroke-width="1"/>
<rect x="1368" y="702" width="1" height="16" fill="#3D3A3A"/>
<rect x="1365.5" y="718.5" width="7" height="65" fill="#26A69A" stroke="#3D3A3A" stroke-width="1"/>
<rect x="1377" y="784" width="1" height="15" fill="#3D3A3A"/>
<rect x="1374.5" y="705.5" width="7" height="78" fill="#26A69A" stroke="#3D3A3A" stroke-width="1"/>
<rect x="1387" y="752" width="1" height="18" fill="#3D3A3A"/>
<rect x="1387" y="784" width="1" height="3" fill="#3D3A3A"/>
<rect x="1384.5" y="770.5" width="7" height="13" fill="#26A69A" stroke="#3D3A3A" stroke-width="1"/>
<rect x="1396" y="768" width="1" height="15" fill="#3D3A3A"/>
<rect x="1393.5" y="783.5" width="7" height="7" fill="#EF5350" stroke="#3D3A3A" stroke-width="1"/>
<rect x="1405" y="771" width="1" height="12" fill="#3D3A3A"/>
<rect x="1402.5" y="783.5" width="7" height="13" fill="#EF5350" stroke="#3D3A3A" stroke-width="1"/>
<rect x="1414" y="778" width="1" height="5" fill="#3D3A3A"/>
<rect x="1411.5" y="783.5" width="7" height="9" fill="#EF5350" stroke="#3D3A3A" stroke-width="1"/>
<rect x="1424" y="793" width="1" height="10" fill="#3D3A3A"/>
<rect x="1421.5" y="783.5" width="7" height="9" fill="#EF5350" stroke="#3D3A3A" stroke-width="1"/>
<rect x="1433" y="784" width="1" height="5" fill="#3D3A3A"/>
<rect x="1430.5" y="767.5" width="7" height="16" fill="#26A69A" stroke="#3D3A3A" stroke-width="1"/>
<rect x="1439.5" y="753.5" width="7" height="30" fill="#26A69A" stroke="#3D3A3A" stroke-width="1"/>
<rect x="1448.5" y="663.5" width="7" height="120" fill="#26A69A" stroke="#3D3A3A" stroke-width="1"/>
<rect x="1461" y="771" width="1" height="5" fill="#3D3A3A"/>
<rect x="1461" y="784" width="1" height="7" fill="#3D3A3A"/>
<rect x="1458.5" y="776.5" width="7" height="7" fill="#26A69A" stroke="#3D3A3A" stroke-width="1"/>
<rect x="1470" y="745" width="1" height="2" fill="#3D3A3A"/>
<rect x="1467.5" y="747.5" width="7" height="36" fill="#26A69A" stroke="#3D3A3A" stroke-width="1"/>
<rect x="1479" y="784" width="1" height="3" fill="#3D3A3A"/>
<rect x="1476.5" y="744.5" width="7" height="39" fill="#26A69A" stroke="#3D3A3A" stroke-width="1"/>
<rect x="1489" y="714" width="1" height="8" fill="#3D3A3A"/>
<rect x="1486.5" y="722.5" width="7" height="61" fill="#26A69A" stroke="#3D3A3A" stroke-width="1"/>
<rect x="1498" y="772" width="1" height="5" fill="#3D3A3A"/>
<rect x="1498" y="784" width="1" height="17" fill="#3D3A3A"/>
<rect x="1495.5" y="777.5" width="7" height="6" fill="#26A69A" stroke="#3D3A3A" stroke-width="1"/>
<rect x="1507" y="778" width="1" height="5" fill="#3D3A3A"/>
<rect x="1507" y="803" width="1" height="2" fill="#3D3A3A"/>
<rect x="1504.5" y="783.5" width="7" height="19" fill="#EF5350" stroke="#3D3A3A" stroke-width="1"/>
<rect x="1513.5" y="783.5" width="7" height="7" fill="#EF5350" stroke="#3D3A3A" stroke-width="1"/>
<rect x="6" y="494" width="2" height="2" fill="#000"/><rect x="12" y="494" width="2" height="2" fill="#000"/><rect x="18" y="494" width="2" height="2" fill="#000"/><rect x="24" y="494" width="2" height="2" fill="#000"/><rect x="30" y="494" width="2" height="2" fill="#000"/><rect x="36" y="494" width="2" height="2" fill="#000"/><rect x="42" y="494" width="2" height="2" fill="#000"/><rect x="48" y="494" width="2" height="2" fill="#000"/><rect x="54" y="494" width="2" height="2" fill="#000"/><rect x="60" y="494" width="2" height="2" fill="#000"/><rect x="66" y="494" width="2" height="2" fill="#000"/><rect x="72" y="494" width="2" height="2" fill="#000"/><rect x="78" y="494" width="2" height="2" fill="#000"/><rect x="84" y="494" width="2" height="2" fill="#000"/><rect x="90" y="494" width="2" height="2" fill="#000"/><rect x="96" y="494" width="2" height="2" fill="#000"/><rect x="102" y="494" width="2" height="2" fill="#000"/><rect x="108" y="494" width="2" height="2" fill="#000"/><rect x="114" y="494" width="2" height="2" fill="#000"/><rect x="120" y="494" width="2" height="2" fill="#000"/><rect x="126" y="494" width="2" height="2" fill="#000"/><rect x="132" y="494" width="2" height="2" fill="#000"/><rect x="138" y="494" width="2" height="2" fill="#000"/><rect x="144" y="494" width="2" height="2" fill="#000"/><rect x="150" y="494" width="2" height="2" fill="#000"/><rect x="156" y="494" width="2" height="2" fill="#000"/><rect x="162" y="494" width="2" height="2" fill="#000"/><rect x="168" y="494" width="2" height="2" fill="#000"/><rect x="174" y="494" width="2" height="2" fill="#000"/><rect x="180" y="494" width="2" height="2" fill="#000"/><rect x="186" y="494" width="2" height="2" fill="#000"/><rect x="192" y="494" width="2" height="2" fill="#000"/><rect x="198" y="494" width="2" height="2" fill="#000"/><rect x="204" y="494" width="2" height="2" fill="#000"/><rect x="210" y="494" width="2" height="2" fill="#000"/><rect x="216" y="494" width="2" height="2" fill="#000"/><rect x="222" y="494" width="2" height="2" fill="#000"/><rect x="228" y="494" width="2" height="2" fill="#000"/><rect x="234" y="494" width="2" height="2" fill="#000"/><rect x="240" y="494" width="2" height="2" fill="#000"/><rect x="246" y="494" width="2" height="2" fill="#000"/><rect x="252" y="494" width="2" height="2" fill="#000"/><rect x="258" y="494" width="2" height="2" fill="#000"/><rect x="264" y="494" width="2" height="2" fill="#000"/><rect x="270" y="494" width="2" height="2" fill="#000"/><rect x="276" y="494" width="2" height="2" fill="#000"/><rect x="282" y="494" width="2" height="2" fill="#000"/><rect x="288" y="494" width="2" height="2" fill="#000"/><rect x="294" y="494" width="2" height="2" fill="#000"/><rect x="300" y="494" width="2" height="2" fill="#000"/><rect x="306" y="494" width="2" height="2" fill="#000"/><rect x="312" y="494" width="2" height="2" fill="#000"/><rect x="318" y="494" width="2" height="2" fill="#000"/><rect x="324" y="494" width="2" height="2" fill="#000"/><rect x="330" y="494" width="2" height="2" fill="#000"/><rect x="336" y="494" width="2" height="2" fill="#000"/><rect x="342" y="494" width="2" height="2" fill="#000"/><rect x="348" y="494" width="2" height="2" fill="#000"/><rect x="354" y="494" width="2" height="2" fill="#000"/><rect x="360" y="494" width="2" height="2" fill="#000"/><rect x="366" y="494" width="2" height="2" fill="#000"/><rect x="372" y="494" width="2" height="2" fill="#000"/><rect x="378" y="494" width="2" height="2" fill="#000"/><rect x="384" y="494" width="2" height="2" fill="#000"/><rect x="390" y="494" width="2" height="2" fill="#000"/><rect x="396" y="494" width="2" height="2" fill="#000"/><rect x="402" y="494" width="2" height="2" fill="#000"/><rect x="408" y="494" width="2" height="2" fill="#000"/><rect x="414" y="494" width="2" height="2" fill="#000"/><rect x="420" y="494" width="2" height="2" fill="#000"/><rect x="426" y="494" width="2" height="2" fill="#000"/><rect x="432" y="494" width="2" height="2" fill="#000"/><rect x="438" y="494" width="2" height="2" fill="#000"/><rect x="444" y="494" width="2" height="2" fill="#000"/><rect x="450" y="494" width="2" height="2" fill="#000"/><rect x="456" y="494" width="2" height="2" fill="#000"/><rect x="462" y="494" width="2" height="2" fill="#000"/><rect x="468" y="494" width="2" height="2" fill="#000"/><rect x="474" y="494" width="2" height="2" fill="#000"/><rect x="480" y="494" width="2" height="2" fill="#000"/><rect x="486" y="494" width="2" height="2" fill="#000"/><rect x="492" y="494" width="2" height="2" fill="#000"/><rect x="498" y="494" width="2" height="2" fill="#000"/><rect x="504" y="494" width="2" height="2" fill="#000"/><rect x="510" y="494" width="2" height="2" fill="#000"/><rect x="516" y="494" width="2" height="2" fill="#000"/><rect x="522" y="494" width="2" height="2" fill="#000"/><rect x="528" y="494" width="2" height="2" fill="#000"/><rect x="534" y="494" width="2" height="2" fill="#000"/><rect x="540" y="494" width="2" height="2" fill="#000"/><rect x="546" y="494" width="2" height="2" fill="#000"/><rect x="552" y="494" width="2" height="2" fill="#000"/><rect x="558" y="494" width="2" height="2" fill="#000"/><rect x="564" y="494" width="2" height="2" fill="#000"/><rect x="570" y="494" width="2" height="2" fill="#000"/><rect x="576" y="494" width="2" height="2" fill="#000"/><rect x="582" y="494" width="2" height="2" fill="#000"/><rect x="588" y="494" width="2" height="2" fill="#000"/><rect x="594" y="494" width="2" height="2" fill="#000"/><rect x="600" y="494" width="2" height="2" fill="#000"/><rect x="606" y="494" width="2" height="2" fill="#000"/><rect x="612" y="494" width="2" height="2" fill="#000"/><rect x="618" y="494" width="2" height="2" fill="#000"/><rect x="624" y="494" width="2" height="2" fill="#000"/><rect x="630" y="494" width="2" height="2" fill="#000"/><rect x="636" y="494" width="2" height="2" fill="#000"/><rect x="642" y="494" width="2" height="2" fill="#000"/><rect x="648" y="494" width="2" height="2" fill="#000"/><rect x="654" y="494" width="2" height="2" fill="#000"/><rect x="660" y="494" width="2" height="2" fill="#000"/><rect x="666" y="494" width="2" height="2" fill="#000"/><rect x="672" y="494" width="2" height="2" fill="#000"/><rect x="678" y="494" width="2" height="2" fill="#000"/><rect x="684" y="494" width="2" height="2" fill="#000"/><rect x="690" y="494" width="2" height="2" fill="#000"/><rect x="696" y="494" width="2" height="2" fill="#000"/><rect x="702" y="494" width="2" height="2" fill="#000"/><rect x="708" y="494" width="2" height="2" fill="#000"/><rect x="714" y="494" width="2" height="2" fill="#000"/><rect x="720" y="494" width="2" height="2" fill="#000"/><rect x="726" y="494" width="2" height="2" fill="#000"/><rect x="732" y="494" width="2" height="2" fill="#000"/><rect x="738" y="494" width="2" height="2" fill="#000"/><rect x="744" y="494" width="2" height="2" fill="#000"/><rect x="750" y="494" width="2" height="2" fill="#000"/><rect x="756" y="494" width="2" height="2" fill="#000"/><rect x="762" y="494" width="2" height="2" fill="#000"/><rect x="768" y="494" width="2" height="2" fill="#000"/><rect x="774" y="494" width="2" height="2" fill="#000"/><rect x="780" y="494" width="2" height="2" fill="#000"/><rect x="786" y="494" width="2" height="2" fill="#000"/><rect x="792" y="494" width="2" height="2" fill="#000"/><rect x="798" y="494" width="2" height="2" fill="#000"/><rect x="804" y="494" width="2" height="2" fill="#000"/><rect x="810" y="494" width="2" height="2" fill="#000"/><rect x="816" y="494" width="2" height="2" fill="#000"/><rect x="822" y="494" width="2" height="2" fill="#000"/><rect x="828" y="494" width="2" height="2" fill="#000"/><rect x="834" y="494" width="2" height="2" fill="#000"/><rect x="840" y="494" width="2" height="2" fill="#000"/><rect x="846" y="494" width="2" height="2" fill="#000"/><rect x="852" y="494" width="2" height="2" fill="#000"/><rect x="858" y="494" width="2" height="2" fill="#000"/><rect x="864" y="494" width="2" height="2" fill="#000"/><rect x="870" y="494" width="2" height="2" fill="#000"/><rect x="876" y="494" width="2" height="2" fill="#000"/><rect x="882" y="494" width="2" height="2" fill="#000"/><rect x="888" y="494" width="2" height="2" fill="#000"/><rect x="894" y="494" width="2" height="2" fill="#000"/><rect x="900" y="494" width="2" height="2" fill="#000"/><rect x="906" y="494" width="2" height="2" fill="#000"/><rect x="912" y="494" width="2" height="2" fill="#000"/><rect x="918" y="494" width="2" height="2" fill="#000"/><rect x="924" y="494" width="2" height="2" fill="#000"/><rect x="930" y="494" width="2" height="2" fill="#000"/><rect x="936" y="494" width="2" height="2" fill="#000"/><rect x="942" y="494" width="2" height="2" fill="#000"/><rect x="948" y="494" width="2" height="2" fill="#000"/><rect x="954" y="494" width="2" height="2" fill="#000"/><rect x="960" y="494" width="2" height="2" fill="#000"/><rect x="966" y="494" width="2" height="2" fill="#000"/><rect x="972" y="494" width="2" height="2" fill="#000"/><rect x="978" y="494" width="2" height="2" fill="#000"/><rect x="984" y="494" width="2" height="2" fill="#000"/><rect x="990" y="494" width="2" height="2" fill="#000"/><rect x="996" y="494" width="2" height="2" fill="#000"/><rect x="1002" y="494" width="2" height="2" fill="#000"/><rect x="1008" y="494" width="2" height="2" fill="#000"/><rect x="1014" y="494" width="2" height="2" fill="#000"/><rect x="1020" y="494" width="2" height="2" fill="#000"/><rect x="1026" y="494" width="2" height="2" fill="#000"/><rect x="1032" y="494" width="2" height="2" fill="#000"/><rect x="1038" y="494" width="2" height="2" fill="#000"/><rect x="1044" y="494" width="2" height="2" fill="#000"/><rect x="1050" y="494" width="2" height="2" fill="#000"/><rect x="1056" y="494" width="2" height="2" fill="#000"/><rect x="1062" y="494" width="2" height="2" fill="#000"/><rect x="1068" y="494" width="2" height="2" fill="#000"/><rect x="1074" y="494" width="2" height="2" fill="#000"/><rect x="1080" y="494" width="2" height="2" fill="#000"/><rect x="1086" y="494" width="2" height="2" fill="#000"/><rect x="1092" y="494" width="2" height="2" fill="#000"/><rect x="1098" y="494" width="2" height="2" fill="#000"/><rect x="1104" y="494" width="2" height="2" fill="#000"/><rect x="1110" y="494" width="2" height="2" fill="#000"/><rect x="1116" y="494" width="2" height="2" fill="#000"/><rect x="1122" y="494" width="2" height="2" fill="#000"/><rect x="1128" y="494" width="2" height="2" fill="#000"/><rect x="1134" y="494" width="2" height="2" fill="#000"/><rect x="1140" y="494" width="2" height="2" fill="#000"/><rect x="1146" y="494" width="2" height="2" fill="#000"/><rect x="1152" y="494" width="2" height="2" fill="#000"/><rect x="1158" y="494" width="2" height="2" fill="#000"/><rect x="1164" y="494" width="2" height="2" fill="#000"/><rect x="1170" y="494" width="2" height="2" fill="#000"/><rect x="1176" y="494" width="2" height="2" fill="#000"/><rect x="1182" y="494" width="2" height="2" fill="#000"/><rect x="1188" y="494" width="2" height="2" fill="#000"/><rect x="1194" y="494" width="2" height="2" fill="#000"/><rect x="1200" y="494" width="2" height="2" fill="#000"/><rect x="1206" y="494" width="2" height="2" fill="#000"/><rect x="1212" y="494" width="2" height="2" fill="#000"/><rect x="1218" y="494" width="2" height="2" fill="#000"/><rect x="1224" y="494" width="2" height="2" fill="#000"/><rect x="1230" y="494" width="2" height="2" fill="#000"/><rect x="1236" y="494" width="2" height="2" fill="#000"/><rect x="1242" y="494" width="2" height="2" fill="#000"/><rect x="1248" y="494" width="2" height="2" fill="#000"/><rect x="1254" y="494" width="2" height="2" fill="#000"/><rect x="1260" y="494" width="2" height="2" fill="#000"/><rect x="1266" y="494" width="2" height="2" fill="#000"/><rect x="1272" y="494" width="2" height="2" fill="#000"/><rect x="1278" y="494" width="2" height="2" fill="#000"/><rect x="1284" y="494" width="2" height="2" fill="#000"/><rect x="1290" y="494" width="2" height="2" fill="#000"/><rect x="1296" y="494" width="2" height="2" fill="#000"/><rect x="1302" y="494" width="2" height="2" fill="#000"/><rect x="1308" y="494" width="2" height="2" fill="#000"/><rect x="1314" y="494" width="2" height="2" fill="#000"/><rect x="1320" y="494" width="2" height="2" fill="#000"/><rect x="1326" y="494" width="2" height="2" fill="#000"/><rect x="1332" y="494" width="2" height="2" fill="#000"/><rect x="1338" y="494" width="2" height="2" fill="#000"/><rect x="1344" y="494" width="2" height="2" fill="#000"/><rect x="1350" y="494" width="2" height="2" fill="#000"/><rect x="1356" y="494" width="2" height="2" fill="#000"/><rect x="1362" y="494" width="2" height="2" fill="#000"/><rect x="1368" y="494" width="2" height="2" fill="#000"/><rect x="1374" y="494" width="2" height="2" fill="#000"/><rect x="1380" y="494" width="2" height="2" fill="#000"/><rect x="1386" y="494" width="2" height="2" fill="#000"/><rect x="1392" y="494" width="2" height="2" fill="#000"/><rect x="1398" y="494" width="2" height="2" fill="#000"/><rect x="1404" y="494" width="2" height="2" fill="#000"/><rect x="1410" y="494" width="2" height="2" fill="#000"/><rect x="1416" y="494" width="2" height="2" fill="#000"/><rect x="1422" y="494" width="2" height="2" fill="#000"/><rect x="1428" y="494" width="2" height="2" fill="#000"/><rect x="1434" y="494" width="2" height="2" fill="#000"/><rect x="1440" y="494" width="2" height="2" fill="#000"/><rect x="1446" y="494" width="2" height="2" fill="#000"/><rect x="1452" y="494" width="2" height="2" fill="#000"/><rect x="1458" y="494" width="2" height="2" fill="#000"/><rect x="1464" y="494" width="2" height="2" fill="#000"/><rect x="1470" y="494" width="2" height="2" fill="#000"/><rect x="1476" y="494" width="2" height="2" fill="#000"/><rect x="1482" y="494" width="2" height="2" fill="#000"/><rect x="1488" y="494" width="2" height="2" fill="#000"/><rect x="1494" y="494" width="2" height="2" fill="#000"/><rect x="1500" y="494" width="2" height="2" fill="#000"/><rect x="1506" y="494" width="2" height="2" fill="#000"/><rect x="1512" y="494" width="2" height="2" fill="#000"/><rect x="1518" y="494" width="2" height="2" fill="#000"/><rect x="1524" y="494" width="2" height="2" fill="#000"/><rect x="1530" y="494" width="2" height="2" fill="#000"/><rect x="1536" y="494" width="2" height="2" fill="#000"/><rect x="1542" y="494" width="2" height="2" fill="#000"/><rect x="1548" y="494" width="2" height="2" fill="#000"/><rect x="1554" y="494" width="2" height="2" fill="#000"/><rect x="1560" y="494" width="2" height="2" fill="#000"/><rect x="1566" y="494" width="2" height="2" fill="#000"/><rect x="1572" y="494" width="2" height="2" fill="#000"/><rect x="1578" y="494" width="2" height="2" fill="#000"/><rect x="1584" y="494" width="2" height="2" fill="#000"/><rect x="1590" y="494" width="2" height="2" fill="#000"/><rect x="1596" y="494" width="2" height="2" fill="#000"/><rect x="1602" y="494" width="2" height="2" fill="#000"/><rect x="1608" y="494" width="2" height="2" fill="#000"/><rect x="1614" y="494" width="2" height="2" fill="#000"/><rect x="1620" y="494" width="2" height="2" fill="#000"/><rect x="1626" y="494" width="2" height="2" fill="#000"/><rect x="1632" y="494" width="2" height="2" fill="#000"/><rect x="1638" y="494" width="2" height="2" fill="#000"/><rect x="1644" y="494" width="2" height="2" fill="#000"/><rect x="1650" y="494" width="2" height="2" fill="#000"/><rect x="1656" y="494" width="2" height="2" fill="#000"/><rect x="1662" y="494" width="2" height="2" fill="#000"/><rect x="1668" y="494" width="2" height="2" fill="#000"/><rect x="1674" y="494" width="2" height="2" fill="#000"/><rect x="1680" y="494" width="2" height="2" fill="#000"/><rect x="1686" y="494" width="2" height="2" fill="#000"/><rect x="1692" y="494" width="2" height="2" fill="#000"/><rect x="1698" y="494" width="2" height="2" fill="#000"/><rect x="1704" y="494" width="2" height="2" fill="#000"/><rect x="1710" y="494" width="2" height="2" fill="#000"/><rect x="1716" y="494" width="2" height="2" fill="#000"/><rect x="1722" y="494" width="2" height="2" fill="#000"/><rect x="1728" y="494" width="2" height="2" fill="#000"/><rect x="1734" y="494" width="2" height="2" fill="#000"/><rect x="1740" y="494" width="2" height="2" fill="#000"/><rect x="1746" y="494" width="2" height="2" fill="#000"/><rect x="1752" y="494" width="2" height="2" fill="#000"/><rect x="1758" y="494" width="2" height="2" fill="#000"/><rect x="1764" y="494" width="2" height="2" fill="#000"/><rect x="1770" y="494" width="2" height="2" fill="#000"/><rect x="1776" y="494" width="2" height="2" fill="#000"/><rect x="1782" y="494" width="2" height="2" fill="#000"/><rect x="1788" y="494" width="2" height="2" fill="#000"/><rect x="1794" y="494" width="2" height="2" fill="#000"/><rect x="1800" y="494" width="2" height="2" fill="#000"/><rect x="1806" y="494" width="2" height="2" fill="#000"/><rect x="1812" y="494" width="2" height="2" fill="#000"/><rect x="1818" y="494" width="2" height="2" fill="#000"/><rect x="1824" y="494" width="2" height="2" fill="#000"/><rect x="1830" y="494" width="2" height="2" fill="#000"/>
</g>
<path d="M1837 495.5 L1845.5 487.5 L1905.5 487.5 L1905.5 504 L1845.5 504 Z" fill="#000"/>
<text x="1847" y="501" class="ax" style="fill:#FFFFD8">1.08245</text>
<rect x="1838" y="783" width="7" height="1" fill="#4B4B55"/>
<text x="1846" y="672" class="ax">1060</text>
<text x="1846" y="789" class="ax">0</text>
<path d="M1837 791 L1845 782 L1874 782 L1874 799 L1845 799 Z" fill="#EF5350"/>
<text x="1847" y="796" class="ax" style="fill:#fff">-57</text>
<text x="1845" y="900" class="ax">-957</text>
<rect x="1792.5" y="121.5" width="20" height="20" fill="#fff" stroke="#111" stroke-width="1"/>
<path d="M1797.2 126 L1805 131.6 L1797.2 137.2 Z" fill="#111" shape-rendering="geometricPrecision"/><rect x="1805.6" y="125.5" width="2.1" height="11.8" fill="#111"/>
<rect x="1898.5" y="121.5" width="12" height="12" fill="#fff" stroke="#111" stroke-width="1"/>
<text x="1900.8" y="130.8" style="font-size:10px;fill:#111">S</text>
</svg>
<div class="t" style="left:10.20px;top:664.30px;font-size:15px;line-height:15px;color:#222;letter-spacing:0.067px;">Delta(Bars, 0.0, True)</div>
<div class="a" style="left:1688px;top:934px;width:10px;height:12px;background:#C9CAD8"></div>
<svg class="a" style="left:1704px;top:933px" width="10" height="14"><path d="M2 2 v10 l6 -5z" fill="#111"/></svg>
<div class="t" style="left:1725.00px;top:932.00px;font-size:15px;line-height:15px;color:#222;letter-spacing:-0.111px;">DOM Trader</div>
<div class="t" style="left:1823.00px;top:932.00px;font-size:15px;line-height:15px;color:#222;letter-spacing:-0.182px;">Chart Trader</div>
<div class="a" style="left:2px;top:957px;width:1915px;height:30px;border:1px solid #0078D4;border-top:none;background:#EEEEF2"></div>
<div class="t" style="left:11.00px;top:964.20px;font-size:15px;line-height:15px;color:#222;">Orders</div>
<div class="t" style="left:72.00px;top:964.20px;font-size:15px;line-height:15px;color:#222;letter-spacing:-1.000px;">Trades</div>
<div class="t" style="left:129.00px;top:964.20px;font-size:15px;line-height:15px;color:#222;letter-spacing:-0.029px;">Positions - Active</div>
<div class="t" style="left:258.00px;top:964.20px;font-size:15px;line-height:15px;color:#222;letter-spacing:-0.143px;">Accounts</div>
<div class="t" style="left:334.00px;top:964.20px;font-size:15px;line-height:15px;color:#222;">Statistics</div>
<div class="t" style="left:4.00px;top:998.00px;font-size:15px;line-height:15px;color:#238A23;letter-spacing:-0.143px;">E2 - server connected.</div>
<svg class="a" style="left:156px;top:1001px" width="14" height="10"><path d="M2 2 h10 l-5 5z" fill="#111"/></svg>
<div class="t" style="left:177.00px;top:998.00px;font-size:15px;line-height:15px;color:#DC2A2E;letter-spacing:-0.242px;">Feed Source: Offline</div>
<svg class="a" style="left:1904px;top:1006px" width="14" height="12"><g fill="#777"><rect x="9" y="2" width="1.5" height="1.5"/><rect x="6" y="5" width="1.5" height="1.5"/><rect x="9" y="5" width="1.5" height="1.5"/><rect x="3" y="8" width="1.5" height="1.5"/><rect x="6" y="8" width="1.5" height="1.5"/><rect x="9" y="8" width="1.5" height="1.5"/></g></svg>
<div class="a" style="left:1570px;top:947px;width:124px;height:57px;background:#F2F4F8;border:1px solid #E2E4EA;border-radius:5px;box-shadow:1px 2px 4px rgba(0,0,0,0.18)"></div>
<div class="t" style="left:1580.60px;top:957.70px;font-size:15px;line-height:15px;color:#222;letter-spacing:-0.778px;">LIANA BEST</div>
<div class="t" style="left:1580.60px;top:978.00px;font-size:15px;line-height:15px;color:#222;">Internet access</div>
<div class="a" style="left:356px;top:0;width:750px;height:1020px;border:1px solid #0078D4;background:#EEEEF2"></div>
<svg style="position:absolute;left:361.8px;top:6.4px" width="25.3" height="22.1" viewBox="0 0 100 87.3">
<path fill-rule="evenodd" d="M25.7 0 L74.3 0 L100 43.65 L74.3 87.3 L25.7 87.3 L0 43.65 Z M30.9 9 L69.1 9 L89.6 43.65 L69.1 78.3 L30.9 78.3 L10.4 43.65 Z" fill="#1A1A1A"/>
<path d="M17 25.7 L51.4 25.7 L26.5 68 L20 70 L5 43.65 Z" fill="#1A1A1A"/>
<path d="M65.6 35.9 L80 64 L50.2 64 Z" fill="#1A1A1A"/>
</svg>
<div class="t" style="left:646.80px;top:9.60px;font-size:15px;line-height:15px;color:#111;font-weight:700;letter-spacing:0.044px;">Indicators</div>
<svg class="a" style="left:990px;top:6px" width="110" height="24">
<rect x="4" y="9.2" width="12" height="3.5" fill="#111"/>
<rect x="46.85" y="5.85" width="10.4" height="10.4" fill="none" stroke="#111" stroke-width="1.3"/><rect x="46.2" y="5.2" width="11.7" height="3.4" fill="#111"/>
<path d="M88.6 6.6 L99.3 15.6 M99.3 6.6 L88.6 15.6" stroke="#111" stroke-width="1.7"/>
</svg>
<div class="a" style="left:365px;top:35px;width:360px;height:641px;border:1px solid #D0D0DC;background:#ECECF1"></div>
<div class="a" style="left:366px;top:36px;width:358px;height:26px;background:#F3F3F6;border-bottom:1px solid #D0D0DC"></div>
<div class="t" style="left:380.00px;top:42.00px;font-size:15px;line-height:15px;color:#222;letter-spacing:-0.053px;">Available indicators</div>
<svg class="a" style="left:704px;top:44px" width="14" height="10"><path d="M2 7.5 h10 l-5 -5z" fill="#111"/></svg>
<div class="a" style="left:366px;top:67px;width:358px;height:28px;border:1px solid #D0D0DC;background:#fff"></div>
<div class="t" style="left:372.00px;top:74.00px;font-size:15px;line-height:15px;color:#8E8E94;">Search</div>
<div class="a" style="left:366px;top:99px;width:358px;height:577px;border:1px solid #D0D0DC;border-bottom:none;background:#fff"></div>
<div class="a" style="left:392px;top:101px;width:311px;height:25px;background:#CCE0F5"></div>
<svg class="a" style="left:374px;top:108px" width="10" height="10"><path d="M9 1 v8 h-8z" fill="#222"/></svg>
<div class="t" style="left:395.00px;top:107.00px;font-size:15px;line-height:15px;color:#222;">1. Custom Indicators</div>
<div class="t" style="left:420.00px;top:132.00px;font-size:15px;line-height:15px;color:#222;">Footprint Patterns</div>
<svg class="a" style="left:374px;top:158px" width="10" height="10"><path d="M9 1 v8 h-8z" fill="#222"/></svg>
<div class="t" style="left:395.00px;top:157.00px;font-size:15px;line-height:15px;color:#222;">Bid x Ask,Delta,Volume</div>
<div class="t" style="left:420.00px;top:182.00px;font-size:15px;line-height:15px;color:#222;">Bar&#x27;s Volume Filter</div>
<div class="t" style="left:420.00px;top:207.00px;font-size:15px;line-height:15px;color:#222;">Bid Ask</div>
<div class="t" style="left:420.00px;top:232.00px;font-size:15px;line-height:15px;color:#222;">Cumulative Daily Volume</div>
<div class="t" style="left:420.00px;top:257.00px;font-size:15px;line-height:15px;color:#222;">CVD - Cumulative Volume Delta</div>
<div class="t" style="left:420.00px;top:282.00px;font-size:15px;line-height:15px;color:#222;">Delta</div>
<div class="t" style="left:421.00px;top:307.00px;font-size:15px;line-height:15px;color:#222;">Volume</div>
<div class="t" style="left:421.00px;top:332.00px;font-size:15px;line-height:15px;color:#222;">Volume On The Chart</div>
<svg class="a" style="left:374px;top:358px" width="10" height="10"><path d="M9 1 v8 h-8z" fill="#222"/></svg>
<div class="t" style="left:395.00px;top:357.00px;font-size:15px;line-height:15px;color:#222;">Clusters, Profiles, Levels</div>
<div class="t" style="left:420.00px;top:382.00px;font-size:15px;line-height:15px;color:#222;">Cluster Search</div>
<div class="t" style="left:420.00px;top:407.00px;font-size:15px;line-height:15px;color:#222;">Cluster Statistic</div>
<div class="t" style="left:420.00px;top:432.00px;font-size:15px;line-height:15px;color:#222;">Dynamic Levels</div>
<div class="t" style="left:420.00px;top:457.00px;font-size:15px;line-height:15px;color:#222;">Dynamic Levels Channel</div>
<div class="t" style="left:420.00px;top:482.00px;font-size:15px;line-height:15px;color:#222;">Market profile &amp; TPO</div>
<div class="t" style="left:420.00px;top:507.00px;font-size:15px;line-height:15px;color:#222;">Maximum Levels</div>
<svg class="a" style="left:374px;top:533px" width="10" height="10"><path d="M9 1 v8 h-8z" fill="#222"/></svg>
<div class="t" style="left:395.00px;top:532.00px;font-size:15px;line-height:15px;color:#222;">Commitments of Traders (COT)</div>
<div class="t" style="left:420.00px;top:557.00px;font-size:15px;line-height:15px;color:#222;">COT Index</div>
<div class="t" style="left:420.00px;top:582.00px;font-size:15px;line-height:15px;color:#222;">COT Net positions</div>
<div class="t" style="left:420.00px;top:607.00px;font-size:15px;line-height:15px;color:#222;">COT Open Interest</div>
<div class="t" style="left:420.00px;top:632.00px;font-size:15px;line-height:15px;color:#222;">COT Williams Index</div>
<svg class="a" style="left:374px;top:658px" width="10" height="10"><path d="M9 1 v8 h-8z" fill="#222"/></svg>
<div class="t" style="left:395.00px;top:657.00px;font-size:15px;line-height:15px;color:#222;">Order Flow</div>
<div class="a" style="left:704px;top:100px;width:20px;height:576px;background:#F3F3F6;border-left:1px solid #D8D8E2"></div>
<svg class="a" style="left:708px;top:105px" width="14" height="10"><path d="M2 8 h10 l-5 -5z" fill="#111"/></svg>
<div class="a" style="left:709px;top:122px;width:12px;height:45px;background:#C9CAD8"></div>
<svg class="a" style="left:708px;top:659px" width="14" height="10"><path d="M2 2 h10 l-5 5z" fill="#111"/></svg>
<div class="a" style="left:365px;top:675px;width:360px;height:1px;background:#D0D0DC"></div>
<svg class="a" style="left:536px;top:676px" width="18" height="5"><g fill="#333"><rect x="1" y="1" width="1" height="3"/><rect x="3" y="1" width="1" height="3"/><rect x="5" y="1" width="1" height="3"/><rect x="7" y="1" width="1" height="3"/><rect x="9" y="1" width="1" height="3"/><rect x="11" y="1" width="1" height="3"/><rect x="13" y="1" width="1" height="3"/><rect x="15" y="1" width="1" height="3"/></g></svg>
<div class="a" style="left:365px;top:681px;width:360px;height:268px;border:1px solid #D0D0DC;background:#fff"></div>
<div class="a" style="left:366px;top:682px;width:358px;height:27px;background:#F3F3F6;border-bottom:1px solid #D0D0DC"></div>
<div class="t" style="left:378.00px;top:688.00px;font-size:15px;line-height:15px;color:#222;">Selected indicators</div>
<div class="a" style="left:367px;top:711px;width:355px;height:27px;background:#0078D4"></div>
<div class="t" style="left:374.50px;top:718.00px;font-size:15px;line-height:15px;color:#fff;letter-spacing:-0.448px;">Delta(Bars, 0.0, True)</div>
<svg class="a" style="left:700px;top:719px" width="16" height="12"><path d="M1 6 Q8 -1 15 6 Q8 13 1 6z" fill="#1a1a1a"/><circle cx="8" cy="6" r="2.2" fill="#0078D4"/><circle cx="8" cy="6" r="1" fill="#1a1a1a"/></svg>
<div class="a" style="left:365px;top:892px;width:360px;height:57px;background:#EEEEF2;border:1px solid #D0D0DC"></div>
<div class="a" style="left:366px;top:893px;width:179px;height:27px;background:#EFEFF3;border:1px solid #DCDCE4"></div>
<div class="a" style="left:545px;top:893px;width:179px;height:27px;background:#EFEFF3;border:1px solid #DCDCE4"></div>
<div class="a" style="left:366px;top:920px;width:179px;height:28px;background:#EFEFF3;border:1px solid #DCDCE4"></div>
<div class="a" style="left:545px;top:920px;width:179px;height:28px;background:#F3F3F6;border:1px solid #C8C9D6"></div>
<div class="t" style="left:445.00px;top:899.50px;font-size:15px;line-height:15px;color:#A6A6AC;">Up</div>
<div class="t" style="left:620.80px;top:899.50px;font-size:15px;line-height:15px;color:#A6A6AC;">Add</div>
<div class="t" style="left:435.50px;top:927.30px;font-size:15px;line-height:15px;color:#A6A6AC;letter-spacing:0.200px;">Down</div>
<div class="t" style="left:612.30px;top:927.30px;font-size:15px;line-height:15px;color:#111;">Delete</div>
<div class="a" style="left:731px;top:35px;width:366px;height:914px;border:1px solid #D0D0DC;background:#ECECF1"></div>
<div class="a" style="left:732px;top:36px;width:364px;height:26px;background:#F3F3F6;border-bottom:1px solid #D0D0DC"></div>
<div class="t" style="left:746.00px;top:42.00px;font-size:15px;line-height:15px;color:#222;letter-spacing:0.059px;">Indicator settings</div>
<div class="a" style="left:736px;top:67px;width:356px;height:28px;border:1px solid #D0D0DC;background:#fff"></div>
<div class="t" style="left:741.00px;top:74.00px;font-size:15px;line-height:15px;color:#8E8E94;">Search</div>
<div class="a" style="left:732px;top:99px;width:364px;height:764px;border-top:1px solid #D0D0DC;border-bottom:1px solid #D0D0DC;background:#fff"></div>
<div class="a" style="left:1075px;top:100px;width:21px;height:762px;background:#F3F3F6;border-left:1px solid #D8D8E2"></div>
<svg class="a" style="left:1079px;top:104px" width="14" height="10"><path d="M2 8 h10 l-5 -5z" fill="#111"/></svg>
<svg class="a" style="left:1079px;top:847px" width="14" height="10"><path d="M2 2 h10 l-5 5z" fill="#111"/></svg>
<div class="a" style="left:733px;top:100px;width:342px;height:26px;background:#D3D3D3;border-bottom:1px solid #D8D8E4"></div>
<svg class="a" style="left:741px;top:107px" width="10" height="10"><path d="M9 1 v8 h-8z" fill="#222"/></svg>
<div class="t" style="left:760.00px;top:105.50px;font-size:16px;line-height:16px;color:#111;font-weight:700;letter-spacing:-0.017px;">Visualization</div>
<div class="a" style="left:733px;top:126px;width:342px;height:28px;border-bottom:1px solid #D8D8E4"></div>
<div class="a" style="left:903px;top:126px;width:1px;height:27px;background:#D8D8E4"></div>
<div class="t" style="left:760.00px;top:132.80px;font-size:16px;line-height:16px;color:#1a1a1a;letter-spacing:0.110px;">Visual Mode</div>
<div class="t" style="left:908.50px;top:132.80px;font-size:16px;line-height:16px;color:#1a1a1a;letter-spacing:-0.217px;">Candles</div>
<div class="a" style="left:733px;top:154px;width:342px;height:29px;border-bottom:1px solid #D8D8E4"></div>
<div class="a" style="left:903px;top:154px;width:1px;height:28px;background:#D8D8E4"></div>
<div class="t" style="left:759.00px;top:161.80px;font-size:16px;line-height:16px;color:#1a1a1a;letter-spacing:0.431px;">Minimized mode</div>
<div class="a" style="left:904px;top:160px;width:18px;height:18px;border:1px solid #CDCEDA;background:#fff"></div>
<div class="a" style="left:733px;top:183px;width:342px;height:28px;border-bottom:1px solid #D8D8E4"></div>
<div class="a" style="left:903px;top:183px;width:1px;height:27px;background:#D8D8E4"></div>
<div class="t" style="left:759.00px;top:189.80px;font-size:16px;line-height:16px;color:#1a1a1a;letter-spacing:-0.078px;">Show value</div>
<div class="a" style="left:904px;top:188px;width:18px;height:18px;border:1px solid #CDCEDA;background:#fff"></div>
<svg class="a" style="left:904px;top:188px" width="18" height="18"><path d="M4 9 l3.5 3.5 l6.5 -7" fill="none" stroke="#111" stroke-width="1.8"/></svg>
<div class="a" style="left:733px;top:211px;width:342px;height:27px;background:#D3D3D3;border-bottom:1px solid #D8D8E4"></div>
<svg class="a" style="left:741px;top:219px" width="10" height="10"><path d="M9 1 v8 h-8z" fill="#222"/></svg>
<div class="t" style="left:759.00px;top:217.50px;font-size:16px;line-height:16px;color:#111;font-weight:700;letter-spacing:-0.033px;">Filters</div>
<div class="a" style="left:733px;top:238px;width:342px;height:28px;border-bottom:1px solid #D8D8E4"></div>
<div class="a" style="left:903px;top:238px;width:1px;height:27px;background:#D8D8E4"></div>
<div class="t" style="left:759.00px;top:244.80px;font-size:16px;line-height:16px;color:#1a1a1a;letter-spacing:0.069px;">Bars direction</div>
<div class="t" style="left:909.50px;top:244.80px;font-size:16px;line-height:16px;color:#1a1a1a;letter-spacing:-0.600px;">Any</div>
<div class="a" style="left:733px;top:266px;width:342px;height:28px;border-bottom:1px solid #D8D8E4"></div>
<div class="a" style="left:903px;top:266px;width:1px;height:27px;background:#D8D8E4"></div>
<div class="t" style="left:759.00px;top:272.80px;font-size:16px;line-height:16px;color:#1a1a1a;letter-spacing:0.211px;">Delta type</div>
<div class="t" style="left:909.50px;top:272.80px;font-size:16px;line-height:16px;color:#1a1a1a;letter-spacing:-0.600px;">Any</div>
<div class="a" style="left:733px;top:294px;width:342px;height:28px;border-bottom:1px solid #D8D8E4"></div>
<div class="a" style="left:903px;top:294px;width:1px;height:27px;background:#D8D8E4"></div>
<div class="t" style="left:759.00px;top:300.80px;font-size:16px;line-height:16px;color:#1a1a1a;letter-spacing:-0.040px;">Filter</div>
<div class="t" style="left:908.50px;top:300.80px;font-size:16px;line-height:16px;color:#1a1a1a;letter-spacing:0.600px;">0.</div>
<div class="a" style="left:733px;top:322px;width:342px;height:29px;border-bottom:1px solid #D8D8E4"></div>
<div class="a" style="left:903px;top:322px;width:1px;height:28px;background:#D8D8E4"></div>
<div class="t" style="left:759.00px;top:329.80px;font-size:16px;line-height:16px;color:#1a1a1a;letter-spacing:0.043px;">Show divergence</div>
<div class="a" style="left:904px;top:328px;width:18px;height:18px;border:1px solid #CDCEDA;background:#fff"></div>
<div class="a" style="left:733px;top:351px;width:342px;height:27px;background:#D3D3D3;border-bottom:1px solid #D8D8E4"></div>
<svg class="a" style="left:741px;top:359px" width="10" height="10"><path d="M9 1 v8 h-8z" fill="#222"/></svg>
<div class="t" style="left:760.00px;top:357.50px;font-size:16px;line-height:16px;color:#111;font-weight:700;letter-spacing:0.118px;">Volume label</div>
<div class="a" style="left:733px;top:378px;width:342px;height:28px;border-bottom:1px solid #D8D8E4"></div>
<div class="a" style="left:903px;top:378px;width:1px;height:27px;background:#D8D8E4"></div>
<div class="t" style="left:759.00px;top:384.80px;font-size:16px;line-height:16px;color:#1a1a1a;letter-spacing:-0.233px;">Show</div>
<div class="a" style="left:904px;top:383px;width:18px;height:18px;border:1px solid #CDCEDA;background:#fff"></div>
<div class="a" style="left:733px;top:406px;width:342px;height:26px;border-bottom:1px solid #D8D8E4"></div>
<div class="a" style="left:903px;top:406px;width:1px;height:25px;background:#D8D8E4"></div>
<div class="t" style="left:759.00px;top:410.80px;font-size:16px;line-height:16px;color:#1a1a1a;letter-spacing:0.350px;">Color</div>
<div class="a" style="left:908px;top:410px;width:17px;height:17px;border:1px solid #C4C4CC;background:#000000"></div>
<div class="t" style="left:929.00px;top:410.30px;font-size:15px;line-height:15px;color:#1a1a1a;">Black</div>
<svg class="a" style="left:1058px;top:415px" width="14" height="8"><path d="M2 1 h10 l-5 5z" fill="#111"/></svg>
<div class="a" style="left:733px;top:432px;width:342px;height:28px;border-bottom:1px solid #D8D8E4"></div>
<div class="a" style="left:903px;top:432px;width:1px;height:27px;background:#D8D8E4"></div>
<div class="t" style="left:759.00px;top:438.80px;font-size:16px;line-height:16px;color:#1a1a1a;letter-spacing:0.229px;">Location</div>
<div class="t" style="left:908.50px;top:438.80px;font-size:16px;line-height:16px;color:#1a1a1a;letter-spacing:0.680px;">Middle</div>
<div class="a" style="left:733px;top:460px;width:342px;height:26px;border-bottom:1px solid #D8D8E4"></div>
<div class="a" style="left:903px;top:460px;width:1px;height:25px;background:#D8D8E4"></div>
<div class="t" style="left:759.00px;top:464.80px;font-size:16px;line-height:16px;color:#1a1a1a;letter-spacing:0.267px;">Font</div>
<svg class="a" style="left:741px;top:467px" width="10" height="10"><path d="M2 1 v8 l5 -4z" fill="#222"/></svg>
<div class="t" style="left:907.00px;top:463.80px;font-size:15px;line-height:15px;color:#1a1a1a;letter-spacing:0.660px;">Arial; 10px</div>
<div class="a" style="left:733px;top:486px;width:342px;height:27px;background:#D3D3D3;border-bottom:1px solid #D8D8E4"></div>
<svg class="a" style="left:741px;top:493px" width="10" height="10"><path d="M9 1 v8 h-8z" fill="#222"/></svg>
<div class="t" style="left:760.00px;top:492.50px;font-size:16px;line-height:16px;color:#111;font-weight:700;letter-spacing:-0.060px;">Alerts</div>
<div class="a" style="left:733px;top:513px;width:342px;height:28px;border-bottom:1px solid #D8D8E4"></div>
<div class="a" style="left:903px;top:513px;width:1px;height:27px;background:#D8D8E4"></div>
<div class="t" style="left:759.00px;top:519.80px;font-size:16px;line-height:16px;color:#1a1a1a;letter-spacing:-0.178px;">Use alerts</div>
<div class="a" style="left:904px;top:518px;width:18px;height:18px;border:1px solid #CDCEDA;background:#fff"></div>
<div class="a" style="left:733px;top:541px;width:342px;height:29px;border-bottom:1px solid #D8D8E4"></div>
<div class="a" style="left:903px;top:541px;width:1px;height:28px;background:#D8D8E4"></div>
<div class="t" style="left:759.00px;top:548.80px;font-size:16px;line-height:16px;color:#1a1a1a;letter-spacing:-0.040px;">Filter</div>
<div class="t" style="left:908.50px;top:548.80px;font-size:16px;line-height:16px;color:#1a1a1a;letter-spacing:0.600px;">0.</div>
<div class="a" style="left:733px;top:570px;width:342px;height:29px;border-bottom:1px solid #D8D8E4"></div>
<div class="a" style="left:903px;top:570px;width:1px;height:28px;background:#D8D8E4"></div>
<div class="t" style="left:760.00px;top:577.80px;font-size:16px;line-height:16px;color:#1a1a1a;letter-spacing:-0.078px;">Alert File</div>
<div class="t" style="left:908.50px;top:577.80px;font-size:16px;line-height:16px;color:#1a1a1a;letter-spacing:-0.040px;">alert1</div>
<div class="a" style="left:733px;top:599px;width:342px;height:27px;border-bottom:1px solid #D8D8E4"></div>
<div class="a" style="left:903px;top:599px;width:1px;height:26px;background:#D8D8E4"></div>
<div class="t" style="left:759.00px;top:604.80px;font-size:16px;line-height:16px;color:#1a1a1a;letter-spacing:0.078px;">Font Color</div>
<div class="a" style="left:908px;top:604px;width:17px;height:17px;border:1px solid #C4C4CC;background:#F7F9F9"></div>
<div class="t" style="left:930.00px;top:604.30px;font-size:15px;line-height:15px;color:#1a1a1a;letter-spacing:-0.612px;">#FFF7F9F9</div>
<svg class="a" style="left:1058px;top:609px" width="14" height="8"><path d="M2 1 h10 l-5 5z" fill="#111"/></svg>
<div class="a" style="left:733px;top:626px;width:342px;height:25px;border-bottom:1px solid #D8D8E4"></div>
<div class="a" style="left:903px;top:626px;width:1px;height:24px;background:#D8D8E4"></div>
<div class="t" style="left:759.00px;top:629.80px;font-size:16px;line-height:16px;color:#1a1a1a;letter-spacing:0.144px;">Background</div>
<div class="a" style="left:908px;top:630px;width:17px;height:17px;border:1px solid #C4C4CC;background:#4B4848"></div>
<div class="t" style="left:930.00px;top:629.30px;font-size:15px;line-height:15px;color:#1a1a1a;letter-spacing:-0.138px;">#FF4B4848</div>
<svg class="a" style="left:1058px;top:635px" width="14" height="8"><path d="M2 1 h10 l-5 5z" fill="#111"/></svg>
<div class="a" style="left:733px;top:651px;width:342px;height:27px;background:#D3D3D3;border-bottom:1px solid #D8D8E4"></div>
<svg class="a" style="left:741px;top:659px" width="10" height="10"><path d="M9 1 v8 h-8z" fill="#222"/></svg>
<div class="t" style="left:759.00px;top:657.50px;font-size:16px;line-height:16px;color:#111;font-weight:700;letter-spacing:0.267px;">Misc</div>
<div class="a" style="left:733px;top:678px;width:342px;height:28px;border-bottom:1px solid #D8D8E4"></div>
<div class="a" style="left:903px;top:678px;width:1px;height:27px;background:#D8D8E4"></div>
<div class="t" style="left:759.00px;top:684.80px;font-size:16px;line-height:16px;color:#1a1a1a;letter-spacing:0.153px;">Show description</div>
<div class="a" style="left:904px;top:683px;width:18px;height:18px;border:1px solid #CDCEDA;background:#fff"></div>
<svg class="a" style="left:904px;top:683px" width="18" height="18"><path d="M4 9 l3.5 3.5 l6.5 -7" fill="none" stroke="#111" stroke-width="1.8"/></svg>
<div class="a" style="left:733px;top:706px;width:342px;height:27px;background:#D3D3D3;border-bottom:1px solid #D8D8E4"></div>
<svg class="a" style="left:741px;top:713px" width="10" height="10"><path d="M9 1 v8 h-8z" fill="#222"/></svg>
<div class="t" style="left:759.00px;top:712.50px;font-size:16px;line-height:16px;color:#111;font-weight:700;letter-spacing:0.517px;">Drawing</div>
<div class="a" style="left:733px;top:733px;width:342px;height:28px;border-bottom:1px solid #D8D8E4"></div>
<div class="a" style="left:903px;top:733px;width:1px;height:27px;background:#D8D8E4"></div>
<div class="t" style="left:759.00px;top:739.80px;font-size:16px;line-height:16px;color:#1a1a1a;letter-spacing:-0.350px;">Panel</div>
<div class="t" style="left:908.50px;top:739.80px;font-size:16px;line-height:16px;color:#1a1a1a;">1</div>
<svg class="a" style="left:1058px;top:743px" width="14" height="8"><path d="M2 1 h10 l-5 5z" fill="#111"/></svg>
<div class="a" style="left:733px;top:761px;width:342px;height:27px;border-bottom:1px solid #D8D8E4"></div>
<div class="a" style="left:903px;top:761px;width:1px;height:26px;background:#D8D8E4"></div>
<div class="t" style="left:759.00px;top:766.80px;font-size:16px;line-height:16px;color:#1a1a1a;letter-spacing:0.083px;">Bullish color</div>
<div class="a" style="left:908px;top:766px;width:17px;height:17px;border:1px solid #C4C4CC;background:#26A69A"></div>
<div class="t" style="left:930.00px;top:766.30px;font-size:15px;line-height:15px;color:#1a1a1a;letter-spacing:0.050px;">#FF26A69A</div>
<svg class="a" style="left:1058px;top:771px" width="14" height="8"><path d="M2 1 h10 l-5 5z" fill="#111"/></svg>
<div class="a" style="left:733px;top:788px;width:342px;height:26px;border-bottom:1px solid #D8D8E4"></div>
<div class="a" style="left:903px;top:788px;width:1px;height:25px;background:#D8D8E4"></div>
<div class="t" style="left:759.00px;top:792.80px;font-size:16px;line-height:16px;color:#1a1a1a;">Bearlish color</div>
<div class="a" style="left:908px;top:792px;width:17px;height:17px;border:1px solid #C4C4CC;background:#EF5350"></div>
<div class="t" style="left:930.00px;top:792.30px;font-size:15px;line-height:15px;color:#1a1a1a;letter-spacing:-0.525px;">#FFEF5350</div>
<svg class="a" style="left:1058px;top:797px" width="14" height="8"><path d="M2 1 h10 l-5 5z" fill="#111"/></svg>
<div class="a" style="left:733px;top:814px;width:342px;height:26px;border-bottom:1px solid #D8D8E4"></div>
<div class="a" style="left:903px;top:814px;width:1px;height:25px;background:#D8D8E4"></div>
<div class="t" style="left:759.00px;top:818.80px;font-size:16px;line-height:16px;color:#1a1a1a;letter-spacing:0.205px;">Neutral border co...</div>
<div class="a" style="left:908px;top:818px;width:17px;height:17px;border:1px solid #C4C4CC;background:#403D3D"></div>
<div class="t" style="left:930.00px;top:818.30px;font-size:15px;line-height:15px;color:#1a1a1a;letter-spacing:0.013px;">#FF403D3D</div>
<svg class="a" style="left:1058px;top:823px" width="14" height="8"><path d="M2 1 h10 l-5 5z" fill="#111"/></svg>
<div class="a" style="left:731px;top:920px;width:366px;height:29px;border:1px solid #D0D0DC;background:#EEEEF2"></div>
<div class="t" style="left:847.60px;top:928.30px;font-size:15px;line-height:15px;color:#222;letter-spacing:0.077px;">Description of</div>
<div class="t" style="left:944.40px;top:928.30px;font-size:15px;line-height:15px;color:#1E6FD0;letter-spacing:0.025px;text-decoration:underline">Delta</div>
<div class="a" style="left:885px;top:965px;width:91px;height:30px;background:#0078D4;border-radius:4px"></div>
<div class="t" style="left:919.20px;top:972.90px;font-size:15px;line-height:15px;color:#fff;letter-spacing:0.500px;">OK</div>
<div class="a" style="left:985px;top:964px;width:93px;height:32px;background:#F3F3F6;border:1px solid #CCCDD8;border-radius:4px"></div>
<div class="t" style="left:1008.70px;top:972.90px;font-size:15px;line-height:15px;color:#111;letter-spacing:-0.280px;">Cancel</div>
</body></html>
